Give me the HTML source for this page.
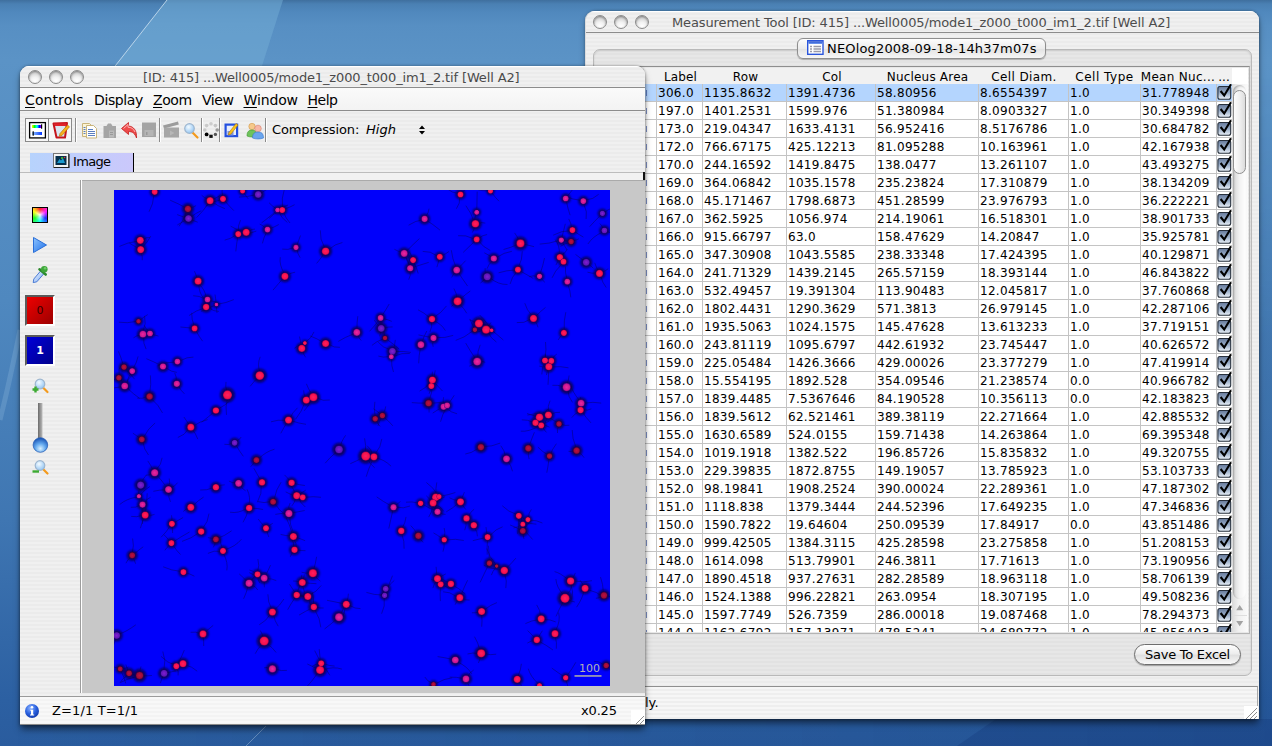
<!DOCTYPE html><html><head><meta charset="utf-8"><title>Measurement Tool</title><style>
html,body{margin:0;padding:0}
body{width:1272px;height:746px;overflow:hidden;position:relative;font-family:"DejaVu Sans","Liberation Sans",sans-serif;font-size:13px;color:#000;
background:linear-gradient(180deg,#3f6f9e 0,#4a80b3 4px,#5088bd 12px,#578fc3 25px,#5b93c6 60px,#4f88bf 300px,#3f76b2 520px,#2c60a2 700px,#2a5c9e 746px)}
.abs{position:absolute}
#bgsvg{position:absolute;left:0;top:0}
.pin{background:repeating-linear-gradient(180deg,#f0f0f0 0,#f0f0f0 2px,#ebebeb 2px,#ebebeb 4px)}
.win{position:absolute;border-radius:9px 9px 0 0;border-top:0;box-shadow:0 5px 7px -1px rgba(0,0,0,.55),0 0 3px rgba(0,0,0,.4);overflow:hidden}
.tbar{position:absolute;left:0;top:0;right:0;height:21px;border-bottom:1px solid #8c8c8c;box-shadow:inset 0 1px 0 #fff;text-align:center;line-height:22px;font-size:13px;white-space:nowrap}
.tl{position:absolute;width:12px;height:12px;border-radius:50%;border:1px solid #8b8b8b;background:radial-gradient(circle at 50% 85%,#fff 0,#f2f2f2 35%,#cfcfcf 75%,#b4b4b4 100%);box-shadow:inset 0 1px 2px rgba(0,0,0,.35)}
/* right window */
#mw{box-shadow:-1px 0 0 #dcdcdc,0 5px 7px -1px rgba(0,0,0,.55),0 0 3px rgba(0,0,0,.4);left:586px;top:11px;width:673px;height:708px}
#mw .tbar{color:#4d4d4d}
.grp{position:absolute;left:7px;top:38px;width:657px;height:625px;border:1px solid #b9b9b9;border-radius:7px;background:rgba(0,0,0,.035);box-shadow:inset 0 1px 2px rgba(0,0,0,.12)}
.tabbtn{position:absolute;left:211px;top:27px;width:247px;height:19px;border:1px solid #8e8e8e;border-radius:6px;background:linear-gradient(180deg,#fdfdfd 0,#ececec 50%,#e2e2e2 51%,#f6f6f6 100%);box-shadow:0 1px 1px rgba(0,0,0,.25);font-size:13px;line-height:19px;white-space:nowrap}
.tbl{position:absolute;left:58px;top:57px;width:588px;height:564px;background:#fff;overflow:hidden;font-size:12px}
.th{position:absolute;top:0;height:16px;line-height:18px;text-align:center;white-space:nowrap;font-size:12px;background:#f1f1f1}
.tr{position:absolute;left:0;width:588px;height:18px;border-bottom:1px solid #c4c4c4;box-sizing:border-box}
.tr.sel{background:#b4d5fe}
.td{position:absolute;top:0;height:17px;line-height:18px;border-left:1px solid #c4c4c4;padding-left:1px;box-sizing:border-box;white-space:nowrap;letter-spacing:.3px}
.cb{position:absolute;top:0;width:16px;height:18px;border-left:1px solid #c4c4c4;margin-left:0}
.cb svg{display:block}
/* left window */
#iw{left:20px;top:66px;width:625px;height:659px}
#iw .tbar{color:#4a4a4a}
.mbar{position:absolute;left:0;top:22px;right:0;height:22px;border-bottom:1px solid #8c8c8c;background:linear-gradient(180deg,#fafafa,#f3f3f3);font-size:14px;line-height:25px;white-space:nowrap}
.mbar span{position:absolute;top:0}
.mbar u{text-decoration:underline;text-underline-offset:2px}
.tsep{position:absolute;top:52px;width:1px;height:24px;background:#8a8a8a;box-shadow:1px 0 0 #fff}
.tbtn{position:absolute;top:52px;height:22px;width:22px;border:1px solid #8a8a8a;background:#f6f6f6}
.ico{position:absolute}
.tabhl{position:absolute;left:10px;top:87px;width:103px;height:19px;background:linear-gradient(90deg,#b7d3fd,#cbc8fb);border-right:1.5px solid #000}
.canvas{position:absolute;left:61px;top:114px;width:563px;height:513px;background:#c8c8c8;border-left:1px solid #fff;box-shadow:-1px 0 0 #9d9d9d, inset 0 1px 0 #aaa}
.sbar{position:absolute;left:0;top:630px;width:625px;height:27px;border-top:1px solid #9a9a9a;border-bottom:1px solid #8a8a8a;background:repeating-linear-gradient(180deg,#f8f8f8 0,#f8f8f8 2px,#f3f3f3 2px,#f3f3f3 4px);font-size:13px;line-height:28px;white-space:nowrap}
.chbtn{position:absolute;left:5px;width:26px;height:27px;border-style:solid;border-width:2px 2px 2px 2px;border-color:#5a5a5a #fff #fff #5a5a5a;font-size:11px;text-align:center;line-height:27px}
.grip{position:absolute;width:14px;height:14px;background:#fff}
.savebtn{position:absolute;left:548px;top:633px;width:105px;height:19px;border:1px solid #6e6e6e;border-radius:11px;background:linear-gradient(180deg,#fefefe 0,#ededed 45%,#e0e0e0 55%,#f8f8f8 100%);box-shadow:0 1px 1px rgba(0,0,0,.3);font-size:13px;text-align:center;line-height:19px;white-space:nowrap}
.stat2{position:absolute;left:0;top:675px;width:671px;height:33px;border-top:1px solid #8f8f8f;border-right:1px solid #aaa;font-size:13px;line-height:32px;white-space:nowrap;background:repeating-linear-gradient(180deg,#f6f6f6 0,#f6f6f6 2px,#eeeeee 2px,#eeeeee 4px)}
.scr{position:absolute;left:646px;top:73px;width:16px;height:548px;background:linear-gradient(90deg,#dadada,#f0f0f0 40%,#fafafa)}
.tick{position:absolute;left:1.5px;top:6px;width:1px;height:6px;background:#2a4aa0;opacity:.6}

</style></head><body>
<svg id="bgsvg" width="1272" height="746" viewBox="0 0 1272 746">
<defs>
<linearGradient id="cbg" x1="0" y1="0" x2="0" y2="1"><stop offset="0" stop-color="#66799a"/><stop offset=".5" stop-color="#98adc8"/><stop offset="1" stop-color="#ecf2f9"/></linearGradient><linearGradient id="tbi" x1="0" y1="0" x2="0" y2="1"><stop offset="0" stop-color="#1c46c8"/><stop offset="1" stop-color="#7aa2f4"/></linearGradient>
<linearGradient id="hz" x1="0" x2="1"><stop offset="0" stop-color="#002060" stop-opacity="0"/><stop offset="1" stop-color="#002060" stop-opacity=".14"/></linearGradient><linearGradient id="vm" x1="0" y1="0" x2="0" y2="1"><stop offset="0" stop-color="#fff" stop-opacity="0"/><stop offset=".1" stop-color="#fff" stop-opacity="0"/><stop offset=".45" stop-color="#fff" stop-opacity="1"/><stop offset="1" stop-color="#fff" stop-opacity="1"/></linearGradient><mask id="vmask"><rect width="1272" height="746" fill="url(#vm)"/></mask></defs>
<rect width="1272" height="746" fill="url(#hz)" mask="url(#vmask)"/>
<polygon points="167,0 283,0 262,66 115,66" fill="#74aed6" opacity=".5"/>
<polygon points="996,719 1272,719 1272,746 957,746" fill="#001a60" opacity=".16"/>
<line x1="246" y1="746" x2="266" y2="726" stroke="#cfe3f2" stroke-width="1" opacity=".35"/>
<path d="M0 420 Q10 380 20 330" stroke="#9cc4e4" stroke-width="5" opacity=".25" fill="none"/>
<line x1="167" y1="0" x2="112" y2="70" stroke="#cfe3f2" stroke-width="1" opacity=".8"/>
</svg>
<div class="win pin" id="mw">
<div class="tbar pin"><span style="position:absolute;left:86px;top:1px;letter-spacing:-.12px">Measurement Tool [ID: 415] ...Well0005/mode1_z000_t000_im1_2.tif [Well A2]</span>
<i class="tl" style="left:7px;top:4px"></i><i class="tl" style="left:28px;top:4px"></i><i class="tl" style="left:49px;top:4px"></i></div>
<div class="grp"></div>
<div class="tabbtn"><svg class="abs" style="left:9px;top:1px" width="17" height="15" viewBox="0 0 17 15"><rect x=".7" y=".7" width="15.300" height="13.600" fill="#fff" stroke="#2a55dc" stroke-width="1.400"/><rect x="1.400" y="1.400" width="14" height="2.600" fill="url(#tbi)"/><path d="M3 6.500h2 M3 9h2 M3 11.500h2 M6.500 6.500h7.500 M6.500 9h7.500 M6.500 11.500h7.500" stroke="#9a9aa8" stroke-width="1.300"/></svg><span style="position:absolute;left:29px;letter-spacing:.16px">NEOlog2008-09-18-14h37m07s</span></div>

<div class="tbl"><div class="abs" style="left:0;top:0;width:588px;height:16px;background:#f1f1f1"></div>
<div class="th" style="left:12px;width:46px;letter-spacing:0.1px;text-indent:3.0px">Label</div>
<div class="th" style="left:58px;width:84px;letter-spacing:0.2px;text-indent:3.0px">Row</div>
<div class="th" style="left:142px;width:89px;letter-spacing:0.2px;text-indent:3.0px">Col</div>
<div class="th" style="left:231px;width:103px;letter-spacing:0.2px;text-indent:2px">Nucleus Area</div>
<div class="th" style="left:334px;width:90px;letter-spacing:0.38px;text-indent:2px">Cell Diam.</div>
<div class="th" style="left:424px;width:72px;letter-spacing:0.5px;text-indent:1.0px">Cell Type</div>
<div class="th" style="left:496px;width:76px;letter-spacing:0.3px;text-indent:0px">Mean Nuc...</div>
<div class="th" style="left:572px;width:16px">...</div>
<div class="tr sel" style="top:16px"><i class="tick"></i>
<span class="td" style="left:12px;width:45px">306.0</span>
<span class="td" style="left:58px;width:83px">1135.8632</span>
<span class="td" style="left:142px;width:88px">1391.4736</span>
<span class="td" style="left:231px;width:102px">58.80956</span>
<span class="td" style="left:334px;width:89px">8.6554397</span>
<span class="td" style="left:424px;width:71px">1.0</span>
<span class="td" style="left:496px;width:75px">31.778948</span>
<span class="cb" style="left:572px"><svg width="16" height="18" viewBox="0 0 16 18"><rect x="0.9" y="2.5" width="12.8" height="12.8" rx="2" fill="url(#cbg)" stroke="#27303c" stroke-width="1.1"/><path d="M3.6 7 L7.2 11.5 L14 0.3" fill="none" stroke="#000" stroke-width="2.1"/></svg></span>
</div>
<div class="tr" style="top:34px"><i class="tick"></i>
<span class="td" style="left:12px;width:45px">197.0</span>
<span class="td" style="left:58px;width:83px">1401.2531</span>
<span class="td" style="left:142px;width:88px">1599.976</span>
<span class="td" style="left:231px;width:102px">51.380984</span>
<span class="td" style="left:334px;width:89px">8.0903327</span>
<span class="td" style="left:424px;width:71px">1.0</span>
<span class="td" style="left:496px;width:75px">30.349398</span>
<span class="cb" style="left:572px"><svg width="16" height="18" viewBox="0 0 16 18"><rect x="0.9" y="2.5" width="12.8" height="12.8" rx="2" fill="url(#cbg)" stroke="#27303c" stroke-width="1.1"/><path d="M3.6 7 L7.2 11.5 L14 0.3" fill="none" stroke="#000" stroke-width="2.1"/></svg></span>
</div>
<div class="tr" style="top:52px"><i class="tick"></i>
<span class="td" style="left:12px;width:45px">173.0</span>
<span class="td" style="left:58px;width:83px">219.04347</span>
<span class="td" style="left:142px;width:88px">1633.4131</span>
<span class="td" style="left:231px;width:102px">56.952416</span>
<span class="td" style="left:334px;width:89px">8.5176786</span>
<span class="td" style="left:424px;width:71px">1.0</span>
<span class="td" style="left:496px;width:75px">30.684782</span>
<span class="cb" style="left:572px"><svg width="16" height="18" viewBox="0 0 16 18"><rect x="0.9" y="2.5" width="12.8" height="12.8" rx="2" fill="url(#cbg)" stroke="#27303c" stroke-width="1.1"/><path d="M3.6 7 L7.2 11.5 L14 0.3" fill="none" stroke="#000" stroke-width="2.1"/></svg></span>
</div>
<div class="tr" style="top:70px"><i class="tick"></i>
<span class="td" style="left:12px;width:45px">172.0</span>
<span class="td" style="left:58px;width:83px">766.67175</span>
<span class="td" style="left:142px;width:88px">425.12213</span>
<span class="td" style="left:231px;width:102px">81.095288</span>
<span class="td" style="left:334px;width:89px">10.163961</span>
<span class="td" style="left:424px;width:71px">1.0</span>
<span class="td" style="left:496px;width:75px">42.167938</span>
<span class="cb" style="left:572px"><svg width="16" height="18" viewBox="0 0 16 18"><rect x="0.9" y="2.5" width="12.8" height="12.8" rx="2" fill="url(#cbg)" stroke="#27303c" stroke-width="1.1"/><path d="M3.6 7 L7.2 11.5 L14 0.3" fill="none" stroke="#000" stroke-width="2.1"/></svg></span>
</div>
<div class="tr" style="top:88px"><i class="tick"></i>
<span class="td" style="left:12px;width:45px">170.0</span>
<span class="td" style="left:58px;width:83px">244.16592</span>
<span class="td" style="left:142px;width:88px">1419.8475</span>
<span class="td" style="left:231px;width:102px">138.0477</span>
<span class="td" style="left:334px;width:89px">13.261107</span>
<span class="td" style="left:424px;width:71px">1.0</span>
<span class="td" style="left:496px;width:75px">43.493275</span>
<span class="cb" style="left:572px"><svg width="16" height="18" viewBox="0 0 16 18"><rect x="0.9" y="2.5" width="12.8" height="12.8" rx="2" fill="url(#cbg)" stroke="#27303c" stroke-width="1.1"/><path d="M3.6 7 L7.2 11.5 L14 0.3" fill="none" stroke="#000" stroke-width="2.1"/></svg></span>
</div>
<div class="tr" style="top:106px"><i class="tick"></i>
<span class="td" style="left:12px;width:45px">169.0</span>
<span class="td" style="left:58px;width:83px">364.06842</span>
<span class="td" style="left:142px;width:88px">1035.1578</span>
<span class="td" style="left:231px;width:102px">235.23824</span>
<span class="td" style="left:334px;width:89px">17.310879</span>
<span class="td" style="left:424px;width:71px">1.0</span>
<span class="td" style="left:496px;width:75px">38.134209</span>
<span class="cb" style="left:572px"><svg width="16" height="18" viewBox="0 0 16 18"><rect x="0.9" y="2.5" width="12.8" height="12.8" rx="2" fill="url(#cbg)" stroke="#27303c" stroke-width="1.1"/><path d="M3.6 7 L7.2 11.5 L14 0.3" fill="none" stroke="#000" stroke-width="2.1"/></svg></span>
</div>
<div class="tr" style="top:124px"><i class="tick"></i>
<span class="td" style="left:12px;width:45px">168.0</span>
<span class="td" style="left:58px;width:83px">45.171467</span>
<span class="td" style="left:142px;width:88px">1798.6873</span>
<span class="td" style="left:231px;width:102px">451.28599</span>
<span class="td" style="left:334px;width:89px">23.976793</span>
<span class="td" style="left:424px;width:71px">1.0</span>
<span class="td" style="left:496px;width:75px">36.222221</span>
<span class="cb" style="left:572px"><svg width="16" height="18" viewBox="0 0 16 18"><rect x="0.9" y="2.5" width="12.8" height="12.8" rx="2" fill="url(#cbg)" stroke="#27303c" stroke-width="1.1"/><path d="M3.6 7 L7.2 11.5 L14 0.3" fill="none" stroke="#000" stroke-width="2.1"/></svg></span>
</div>
<div class="tr" style="top:142px"><i class="tick"></i>
<span class="td" style="left:12px;width:45px">167.0</span>
<span class="td" style="left:58px;width:83px">362.5925</span>
<span class="td" style="left:142px;width:88px">1056.974</span>
<span class="td" style="left:231px;width:102px">214.19061</span>
<span class="td" style="left:334px;width:89px">16.518301</span>
<span class="td" style="left:424px;width:71px">1.0</span>
<span class="td" style="left:496px;width:75px">38.901733</span>
<span class="cb" style="left:572px"><svg width="16" height="18" viewBox="0 0 16 18"><rect x="0.9" y="2.5" width="12.8" height="12.8" rx="2" fill="url(#cbg)" stroke="#27303c" stroke-width="1.1"/><path d="M3.6 7 L7.2 11.5 L14 0.3" fill="none" stroke="#000" stroke-width="2.1"/></svg></span>
</div>
<div class="tr" style="top:160px"><i class="tick"></i>
<span class="td" style="left:12px;width:45px">166.0</span>
<span class="td" style="left:58px;width:83px">915.66797</span>
<span class="td" style="left:142px;width:88px">63.0</span>
<span class="td" style="left:231px;width:102px">158.47629</span>
<span class="td" style="left:334px;width:89px">14.20847</span>
<span class="td" style="left:424px;width:71px">1.0</span>
<span class="td" style="left:496px;width:75px">35.925781</span>
<span class="cb" style="left:572px"><svg width="16" height="18" viewBox="0 0 16 18"><rect x="0.9" y="2.5" width="12.8" height="12.8" rx="2" fill="url(#cbg)" stroke="#27303c" stroke-width="1.1"/><path d="M3.6 7 L7.2 11.5 L14 0.3" fill="none" stroke="#000" stroke-width="2.1"/></svg></span>
</div>
<div class="tr" style="top:178px"><i class="tick"></i>
<span class="td" style="left:12px;width:45px">165.0</span>
<span class="td" style="left:58px;width:83px">347.30908</span>
<span class="td" style="left:142px;width:88px">1043.5585</span>
<span class="td" style="left:231px;width:102px">238.33348</span>
<span class="td" style="left:334px;width:89px">17.424395</span>
<span class="td" style="left:424px;width:71px">1.0</span>
<span class="td" style="left:496px;width:75px">40.129871</span>
<span class="cb" style="left:572px"><svg width="16" height="18" viewBox="0 0 16 18"><rect x="0.9" y="2.5" width="12.8" height="12.8" rx="2" fill="url(#cbg)" stroke="#27303c" stroke-width="1.1"/><path d="M3.6 7 L7.2 11.5 L14 0.3" fill="none" stroke="#000" stroke-width="2.1"/></svg></span>
</div>
<div class="tr" style="top:196px"><i class="tick"></i>
<span class="td" style="left:12px;width:45px">164.0</span>
<span class="td" style="left:58px;width:83px">241.71329</span>
<span class="td" style="left:142px;width:88px">1439.2145</span>
<span class="td" style="left:231px;width:102px">265.57159</span>
<span class="td" style="left:334px;width:89px">18.393144</span>
<span class="td" style="left:424px;width:71px">1.0</span>
<span class="td" style="left:496px;width:75px">46.843822</span>
<span class="cb" style="left:572px"><svg width="16" height="18" viewBox="0 0 16 18"><rect x="0.9" y="2.5" width="12.8" height="12.8" rx="2" fill="url(#cbg)" stroke="#27303c" stroke-width="1.1"/><path d="M3.6 7 L7.2 11.5 L14 0.3" fill="none" stroke="#000" stroke-width="2.1"/></svg></span>
</div>
<div class="tr" style="top:214px"><i class="tick"></i>
<span class="td" style="left:12px;width:45px">163.0</span>
<span class="td" style="left:58px;width:83px">532.49457</span>
<span class="td" style="left:142px;width:88px">19.391304</span>
<span class="td" style="left:231px;width:102px">113.90483</span>
<span class="td" style="left:334px;width:89px">12.045817</span>
<span class="td" style="left:424px;width:71px">1.0</span>
<span class="td" style="left:496px;width:75px">37.760868</span>
<span class="cb" style="left:572px"><svg width="16" height="18" viewBox="0 0 16 18"><rect x="0.9" y="2.5" width="12.8" height="12.8" rx="2" fill="url(#cbg)" stroke="#27303c" stroke-width="1.1"/><path d="M3.6 7 L7.2 11.5 L14 0.3" fill="none" stroke="#000" stroke-width="2.1"/></svg></span>
</div>
<div class="tr" style="top:232px"><i class="tick"></i>
<span class="td" style="left:12px;width:45px">162.0</span>
<span class="td" style="left:58px;width:83px">1802.4431</span>
<span class="td" style="left:142px;width:88px">1290.3629</span>
<span class="td" style="left:231px;width:102px">571.3813</span>
<span class="td" style="left:334px;width:89px">26.979145</span>
<span class="td" style="left:424px;width:71px">1.0</span>
<span class="td" style="left:496px;width:75px">42.287106</span>
<span class="cb" style="left:572px"><svg width="16" height="18" viewBox="0 0 16 18"><rect x="0.9" y="2.5" width="12.8" height="12.8" rx="2" fill="url(#cbg)" stroke="#27303c" stroke-width="1.1"/><path d="M3.6 7 L7.2 11.5 L14 0.3" fill="none" stroke="#000" stroke-width="2.1"/></svg></span>
</div>
<div class="tr" style="top:250px"><i class="tick"></i>
<span class="td" style="left:12px;width:45px">161.0</span>
<span class="td" style="left:58px;width:83px">1935.5063</span>
<span class="td" style="left:142px;width:88px">1024.1575</span>
<span class="td" style="left:231px;width:102px">145.47628</span>
<span class="td" style="left:334px;width:89px">13.613233</span>
<span class="td" style="left:424px;width:71px">1.0</span>
<span class="td" style="left:496px;width:75px">37.719151</span>
<span class="cb" style="left:572px"><svg width="16" height="18" viewBox="0 0 16 18"><rect x="0.9" y="2.5" width="12.8" height="12.8" rx="2" fill="url(#cbg)" stroke="#27303c" stroke-width="1.1"/><path d="M3.6 7 L7.2 11.5 L14 0.3" fill="none" stroke="#000" stroke-width="2.1"/></svg></span>
</div>
<div class="tr" style="top:268px"><i class="tick"></i>
<span class="td" style="left:12px;width:45px">160.0</span>
<span class="td" style="left:58px;width:83px">243.81119</span>
<span class="td" style="left:142px;width:88px">1095.6797</span>
<span class="td" style="left:231px;width:102px">442.61932</span>
<span class="td" style="left:334px;width:89px">23.745447</span>
<span class="td" style="left:424px;width:71px">1.0</span>
<span class="td" style="left:496px;width:75px">40.626572</span>
<span class="cb" style="left:572px"><svg width="16" height="18" viewBox="0 0 16 18"><rect x="0.9" y="2.5" width="12.8" height="12.8" rx="2" fill="url(#cbg)" stroke="#27303c" stroke-width="1.1"/><path d="M3.6 7 L7.2 11.5 L14 0.3" fill="none" stroke="#000" stroke-width="2.1"/></svg></span>
</div>
<div class="tr" style="top:286px"><i class="tick"></i>
<span class="td" style="left:12px;width:45px">159.0</span>
<span class="td" style="left:58px;width:83px">225.05484</span>
<span class="td" style="left:142px;width:88px">1426.3666</span>
<span class="td" style="left:231px;width:102px">429.00026</span>
<span class="td" style="left:334px;width:89px">23.377279</span>
<span class="td" style="left:424px;width:71px">1.0</span>
<span class="td" style="left:496px;width:75px">47.419914</span>
<span class="cb" style="left:572px"><svg width="16" height="18" viewBox="0 0 16 18"><rect x="0.9" y="2.5" width="12.8" height="12.8" rx="2" fill="url(#cbg)" stroke="#27303c" stroke-width="1.1"/><path d="M3.6 7 L7.2 11.5 L14 0.3" fill="none" stroke="#000" stroke-width="2.1"/></svg></span>
</div>
<div class="tr" style="top:304px"><i class="tick"></i>
<span class="td" style="left:12px;width:45px">158.0</span>
<span class="td" style="left:58px;width:83px">15.554195</span>
<span class="td" style="left:142px;width:88px">1892.528</span>
<span class="td" style="left:231px;width:102px">354.09546</span>
<span class="td" style="left:334px;width:89px">21.238574</span>
<span class="td" style="left:424px;width:71px">0.0</span>
<span class="td" style="left:496px;width:75px">40.966782</span>
<span class="cb" style="left:572px"><svg width="16" height="18" viewBox="0 0 16 18"><rect x="0.9" y="2.5" width="12.8" height="12.8" rx="2" fill="url(#cbg)" stroke="#27303c" stroke-width="1.1"/><path d="M3.6 7 L7.2 11.5 L14 0.3" fill="none" stroke="#000" stroke-width="2.1"/></svg></span>
</div>
<div class="tr" style="top:322px"><i class="tick"></i>
<span class="td" style="left:12px;width:45px">157.0</span>
<span class="td" style="left:58px;width:83px">1839.4485</span>
<span class="td" style="left:142px;width:88px">7.5367646</span>
<span class="td" style="left:231px;width:102px">84.190528</span>
<span class="td" style="left:334px;width:89px">10.356113</span>
<span class="td" style="left:424px;width:71px">0.0</span>
<span class="td" style="left:496px;width:75px">42.183823</span>
<span class="cb" style="left:572px"><svg width="16" height="18" viewBox="0 0 16 18"><rect x="0.9" y="2.5" width="12.8" height="12.8" rx="2" fill="url(#cbg)" stroke="#27303c" stroke-width="1.1"/><path d="M3.6 7 L7.2 11.5 L14 0.3" fill="none" stroke="#000" stroke-width="2.1"/></svg></span>
</div>
<div class="tr" style="top:340px"><i class="tick"></i>
<span class="td" style="left:12px;width:45px">156.0</span>
<span class="td" style="left:58px;width:83px">1839.5612</span>
<span class="td" style="left:142px;width:88px">62.521461</span>
<span class="td" style="left:231px;width:102px">389.38119</span>
<span class="td" style="left:334px;width:89px">22.271664</span>
<span class="td" style="left:424px;width:71px">1.0</span>
<span class="td" style="left:496px;width:75px">42.885532</span>
<span class="cb" style="left:572px"><svg width="16" height="18" viewBox="0 0 16 18"><rect x="0.9" y="2.5" width="12.8" height="12.8" rx="2" fill="url(#cbg)" stroke="#27303c" stroke-width="1.1"/><path d="M3.6 7 L7.2 11.5 L14 0.3" fill="none" stroke="#000" stroke-width="2.1"/></svg></span>
</div>
<div class="tr" style="top:358px"><i class="tick"></i>
<span class="td" style="left:12px;width:45px">155.0</span>
<span class="td" style="left:58px;width:83px">1630.6589</span>
<span class="td" style="left:142px;width:88px">524.0155</span>
<span class="td" style="left:231px;width:102px">159.71438</span>
<span class="td" style="left:334px;width:89px">14.263864</span>
<span class="td" style="left:424px;width:71px">1.0</span>
<span class="td" style="left:496px;width:75px">69.395348</span>
<span class="cb" style="left:572px"><svg width="16" height="18" viewBox="0 0 16 18"><rect x="0.9" y="2.5" width="12.8" height="12.8" rx="2" fill="url(#cbg)" stroke="#27303c" stroke-width="1.1"/><path d="M3.6 7 L7.2 11.5 L14 0.3" fill="none" stroke="#000" stroke-width="2.1"/></svg></span>
</div>
<div class="tr" style="top:376px"><i class="tick"></i>
<span class="td" style="left:12px;width:45px">154.0</span>
<span class="td" style="left:58px;width:83px">1019.1918</span>
<span class="td" style="left:142px;width:88px">1382.522</span>
<span class="td" style="left:231px;width:102px">196.85726</span>
<span class="td" style="left:334px;width:89px">15.835832</span>
<span class="td" style="left:424px;width:71px">1.0</span>
<span class="td" style="left:496px;width:75px">49.320755</span>
<span class="cb" style="left:572px"><svg width="16" height="18" viewBox="0 0 16 18"><rect x="0.9" y="2.5" width="12.8" height="12.8" rx="2" fill="url(#cbg)" stroke="#27303c" stroke-width="1.1"/><path d="M3.6 7 L7.2 11.5 L14 0.3" fill="none" stroke="#000" stroke-width="2.1"/></svg></span>
</div>
<div class="tr" style="top:394px"><i class="tick"></i>
<span class="td" style="left:12px;width:45px">153.0</span>
<span class="td" style="left:58px;width:83px">229.39835</span>
<span class="td" style="left:142px;width:88px">1872.8755</span>
<span class="td" style="left:231px;width:102px">149.19057</span>
<span class="td" style="left:334px;width:89px">13.785923</span>
<span class="td" style="left:424px;width:71px">1.0</span>
<span class="td" style="left:496px;width:75px">53.103733</span>
<span class="cb" style="left:572px"><svg width="16" height="18" viewBox="0 0 16 18"><rect x="0.9" y="2.5" width="12.8" height="12.8" rx="2" fill="url(#cbg)" stroke="#27303c" stroke-width="1.1"/><path d="M3.6 7 L7.2 11.5 L14 0.3" fill="none" stroke="#000" stroke-width="2.1"/></svg></span>
</div>
<div class="tr" style="top:412px"><i class="tick"></i>
<span class="td" style="left:12px;width:45px">152.0</span>
<span class="td" style="left:58px;width:83px">98.19841</span>
<span class="td" style="left:142px;width:88px">1908.2524</span>
<span class="td" style="left:231px;width:102px">390.00024</span>
<span class="td" style="left:334px;width:89px">22.289361</span>
<span class="td" style="left:424px;width:71px">1.0</span>
<span class="td" style="left:496px;width:75px">47.187302</span>
<span class="cb" style="left:572px"><svg width="16" height="18" viewBox="0 0 16 18"><rect x="0.9" y="2.5" width="12.8" height="12.8" rx="2" fill="url(#cbg)" stroke="#27303c" stroke-width="1.1"/><path d="M3.6 7 L7.2 11.5 L14 0.3" fill="none" stroke="#000" stroke-width="2.1"/></svg></span>
</div>
<div class="tr" style="top:430px"><i class="tick"></i>
<span class="td" style="left:12px;width:45px">151.0</span>
<span class="td" style="left:58px;width:83px">1118.838</span>
<span class="td" style="left:142px;width:88px">1379.3444</span>
<span class="td" style="left:231px;width:102px">244.52396</span>
<span class="td" style="left:334px;width:89px">17.649235</span>
<span class="td" style="left:424px;width:71px">1.0</span>
<span class="td" style="left:496px;width:75px">47.346836</span>
<span class="cb" style="left:572px"><svg width="16" height="18" viewBox="0 0 16 18"><rect x="0.9" y="2.5" width="12.8" height="12.8" rx="2" fill="url(#cbg)" stroke="#27303c" stroke-width="1.1"/><path d="M3.6 7 L7.2 11.5 L14 0.3" fill="none" stroke="#000" stroke-width="2.1"/></svg></span>
</div>
<div class="tr" style="top:448px"><i class="tick"></i>
<span class="td" style="left:12px;width:45px">150.0</span>
<span class="td" style="left:58px;width:83px">1590.7822</span>
<span class="td" style="left:142px;width:88px">19.64604</span>
<span class="td" style="left:231px;width:102px">250.09539</span>
<span class="td" style="left:334px;width:89px">17.84917</span>
<span class="td" style="left:424px;width:71px">0.0</span>
<span class="td" style="left:496px;width:75px">43.851486</span>
<span class="cb" style="left:572px"><svg width="16" height="18" viewBox="0 0 16 18"><rect x="0.9" y="2.5" width="12.8" height="12.8" rx="2" fill="url(#cbg)" stroke="#27303c" stroke-width="1.1"/><path d="M3.6 7 L7.2 11.5 L14 0.3" fill="none" stroke="#000" stroke-width="2.1"/></svg></span>
</div>
<div class="tr" style="top:466px"><i class="tick"></i>
<span class="td" style="left:12px;width:45px">149.0</span>
<span class="td" style="left:58px;width:83px">999.42505</span>
<span class="td" style="left:142px;width:88px">1384.3115</span>
<span class="td" style="left:231px;width:102px">425.28598</span>
<span class="td" style="left:334px;width:89px">23.275858</span>
<span class="td" style="left:424px;width:71px">1.0</span>
<span class="td" style="left:496px;width:75px">51.208153</span>
<span class="cb" style="left:572px"><svg width="16" height="18" viewBox="0 0 16 18"><rect x="0.9" y="2.5" width="12.8" height="12.8" rx="2" fill="url(#cbg)" stroke="#27303c" stroke-width="1.1"/><path d="M3.6 7 L7.2 11.5 L14 0.3" fill="none" stroke="#000" stroke-width="2.1"/></svg></span>
</div>
<div class="tr" style="top:484px"><i class="tick"></i>
<span class="td" style="left:12px;width:45px">148.0</span>
<span class="td" style="left:58px;width:83px">1614.098</span>
<span class="td" style="left:142px;width:88px">513.79901</span>
<span class="td" style="left:231px;width:102px">246.3811</span>
<span class="td" style="left:334px;width:89px">17.71613</span>
<span class="td" style="left:424px;width:71px">1.0</span>
<span class="td" style="left:496px;width:75px">73.190956</span>
<span class="cb" style="left:572px"><svg width="16" height="18" viewBox="0 0 16 18"><rect x="0.9" y="2.5" width="12.8" height="12.8" rx="2" fill="url(#cbg)" stroke="#27303c" stroke-width="1.1"/><path d="M3.6 7 L7.2 11.5 L14 0.3" fill="none" stroke="#000" stroke-width="2.1"/></svg></span>
</div>
<div class="tr" style="top:502px"><i class="tick"></i>
<span class="td" style="left:12px;width:45px">147.0</span>
<span class="td" style="left:58px;width:83px">1890.4518</span>
<span class="td" style="left:142px;width:88px">937.27631</span>
<span class="td" style="left:231px;width:102px">282.28589</span>
<span class="td" style="left:334px;width:89px">18.963118</span>
<span class="td" style="left:424px;width:71px">1.0</span>
<span class="td" style="left:496px;width:75px">58.706139</span>
<span class="cb" style="left:572px"><svg width="16" height="18" viewBox="0 0 16 18"><rect x="0.9" y="2.5" width="12.8" height="12.8" rx="2" fill="url(#cbg)" stroke="#27303c" stroke-width="1.1"/><path d="M3.6 7 L7.2 11.5 L14 0.3" fill="none" stroke="#000" stroke-width="2.1"/></svg></span>
</div>
<div class="tr" style="top:520px"><i class="tick"></i>
<span class="td" style="left:12px;width:45px">146.0</span>
<span class="td" style="left:58px;width:83px">1524.1388</span>
<span class="td" style="left:142px;width:88px">996.22821</span>
<span class="td" style="left:231px;width:102px">263.0954</span>
<span class="td" style="left:334px;width:89px">18.307195</span>
<span class="td" style="left:424px;width:71px">1.0</span>
<span class="td" style="left:496px;width:75px">49.508236</span>
<span class="cb" style="left:572px"><svg width="16" height="18" viewBox="0 0 16 18"><rect x="0.9" y="2.5" width="12.8" height="12.8" rx="2" fill="url(#cbg)" stroke="#27303c" stroke-width="1.1"/><path d="M3.6 7 L7.2 11.5 L14 0.3" fill="none" stroke="#000" stroke-width="2.1"/></svg></span>
</div>
<div class="tr" style="top:538px"><i class="tick"></i>
<span class="td" style="left:12px;width:45px">145.0</span>
<span class="td" style="left:58px;width:83px">1597.7749</span>
<span class="td" style="left:142px;width:88px">526.7359</span>
<span class="td" style="left:231px;width:102px">286.00018</span>
<span class="td" style="left:334px;width:89px">19.087468</span>
<span class="td" style="left:424px;width:71px">1.0</span>
<span class="td" style="left:496px;width:75px">78.294373</span>
<span class="cb" style="left:572px"><svg width="16" height="18" viewBox="0 0 16 18"><rect x="0.9" y="2.5" width="12.8" height="12.8" rx="2" fill="url(#cbg)" stroke="#27303c" stroke-width="1.1"/><path d="M3.6 7 L7.2 11.5 L14 0.3" fill="none" stroke="#000" stroke-width="2.1"/></svg></span>
</div>
<div class="tr" style="top:556px"><i class="tick"></i>
<span class="td" style="left:12px;width:45px">144.0</span>
<span class="td" style="left:58px;width:83px">1162.6792</span>
<span class="td" style="left:142px;width:88px">157.13971</span>
<span class="td" style="left:231px;width:102px">478.5241</span>
<span class="td" style="left:334px;width:89px">24.689772</span>
<span class="td" style="left:424px;width:71px">1.0</span>
<span class="td" style="left:496px;width:75px">45.856403</span>
<span class="cb" style="left:572px"><svg width="16" height="18" viewBox="0 0 16 18"><rect x="0.9" y="2.5" width="12.8" height="12.8" rx="2" fill="url(#cbg)" stroke="#27303c" stroke-width="1.1"/><path d="M3.6 7 L7.2 11.5 L14 0.3" fill="none" stroke="#000" stroke-width="2.1"/></svg></span>
</div>
</div>
<div class="abs" style="left:646px;top:57px;width:16px;height:16px;background:#fff"></div><div class="abs" style="left:50px;top:55px;width:612px;height:566px;border:1px solid #b4b4b4;border-top-color:#8e8e8e;box-sizing:content-box;pointer-events:none"></div>
<div class="scr">
<div class="abs" style="left:1px;top:1px;width:13px;height:514px;border-radius:7px;background:linear-gradient(90deg,#d6d6d6,#f2f2f2 50%,#fff);box-shadow:inset 1px 1px 2px rgba(0,0,0,.25)"></div>
<div class="abs" style="left:1px;top:6px;width:13px;height:84px;border-radius:7px;border:1px solid #8f8f8f;box-sizing:border-box;background:linear-gradient(90deg,#fdfdfd,#f0f0f0 50%,#dcdcdc)"></div>
<svg class="abs" style="left:0;top:516px" width="16" height="32" viewBox="0 0 16 32"><path d="M4.2 10.2 L7.700 5 L11.200 10.200Z M4.200 21 L7.700 26.200 L11.200 21Z" fill="#a2a2a2"/><path d="M0 15.500H15" stroke="#dedede" stroke-width="1"/></svg>
</div>
<div class="savebtn"><span style="letter-spacing:-.27px">Save To Excel</span></div>
<div class="stat2"><span style="position:absolute;left:59px;top:0">ly.</span></div>
<div class="grip" style="left:658px;top:695px"><svg width="14" height="14" viewBox="0 0 14 14"><path d="M2 13 L13 2 M6 13 L13 6 M10 13 L13 10" stroke="#8d8d8d" stroke-width="1" fill="none"/></svg></div>
</div>

<div class="win pin" id="iw">
<div class="tbar pin"><span style="position:absolute;left:123px;top:1px;letter-spacing:-.14px">[ID: 415] ...Well0005/mode1_z000_t000_im1_2.tif [Well A2]</span>
<i class="tl" style="left:8px;top:4px"></i><i class="tl" style="left:29px;top:4px"></i><i class="tl" style="left:50px;top:4px"></i></div>
<div class="mbar"><span style="left:5px;letter-spacing:.1px"><u>C</u>ontrols</span><span style="left:74px;letter-spacing:-.38px">Display</span><span style="left:133px;letter-spacing:-.45px"><u>Z</u>oom</span><span style="left:182px;letter-spacing:-.44px">View</span><span style="left:223.500px;letter-spacing:-.14px"><u>W</u>indow</span><span style="left:287.500px;letter-spacing:-.5px"><u>H</u>elp</span></div>

<!-- toolbar -->
<div class="tbtn" style="left:5px"></div><div class="tbtn" style="left:28px"></div>
<i class="tsep" style="left:55px"></i><i class="tsep" style="left:139px"></i><i class="tsep" style="left:181px"></i><i class="tsep" style="left:199px"></i><i class="tsep" style="left:245px"></i>
<svg class="ico" style="left:0;top:44px" width="300" height="40" viewBox="0 0 300 40">
<defs>
<linearGradient id="rb" x1="0" x2="1"><stop offset="0" stop-color="#ff0"/><stop offset=".25" stop-color="#0f0"/><stop offset=".5" stop-color="#0ff"/><stop offset=".75" stop-color="#00f"/><stop offset="1" stop-color="#f0f"/></linearGradient>
<linearGradient id="bl" x1="0" x2="1"><stop offset="0" stop-color="#9cf"/><stop offset="1" stop-color="#03f"/></linearGradient>
<radialGradient id="lens" cx=".4" cy=".35" r=".7"><stop offset="0" stop-color="#f4fbff"/><stop offset="1" stop-color="#8ec3f3"/></radialGradient>
</defs>
<!-- icon1 -->
<rect x="9.6" y="12.6" width="15.8" height="15.3" fill="#fff" stroke="#000" stroke-width="1.3"/>
<rect x="12" y="15" width="10" height="3" fill="url(#rb)"/><rect x="12" y="22" width="10" height="3" fill="url(#bl)"/>
<rect x="21" y="14.3" width="1.2" height="4.4" fill="#000"/><rect x="12.6" y="21.3" width="1.2" height="4.4" fill="#000"/>
<!-- icon2 notepad -->
<path d="M33.5 13.5 L47 13 L45 27.5 L36.5 27.5 Z" fill="#d9e6f2" stroke="#c4141c" stroke-width="2" stroke-linejoin="round"/>
<path d="M34 13.5 L46.5 13.2 L46 16 L35 16Z" fill="#e0222a"/>
<path d="M40 23.5 L47.5 15 L49.5 16.8 L42 25.5 L39.3 26.3Z" fill="#f6b21b" stroke="#b26b00" stroke-width=".6"/>
<!-- copy -->
<path d="M62.5 13.5 h7 l2.5 2.5 v10.5 h-9.5z" fill="#fbf3d5" stroke="#c9b47a" stroke-width="1"/>
<path d="M66.5 15.5 h7 l3 3 v9.5 h-10z" fill="#fff" stroke="#c9b47a" stroke-width="1"/>
<path d="M68 19.5h5 M68 21.5h7 M68 23.5h7 M68 25.5h7 M63.5 17.5h2 M63.5 19.5h2 M63.5 21.5h2 M63.5 23.5h2" stroke="#5b7fc0" stroke-width="1"/>
<!-- paste gray -->
<path d="M83.5 16 h3 l1.5-2.5 h3 l1.5 2.5 h3.5 v12 h-12.5z" fill="#a5a5a5"/>
<path d="M89 20.5h5v7h-5z" fill="#b9b9b9"/><path d="M90 22.5h3M90 24.5h3" stroke="#999" stroke-width="1"/>
<!-- undo -->
<path d="M101.5 18.5 L108.5 12.5 L108.5 16 C114 16.5 117 21 116.5 28 C115 23.5 112.5 21.5 108.5 21.5 L108.5 24.5 Z" fill="#ee4a4a" stroke="#c32020" stroke-width=".8" stroke-linejoin="round"/>
<path d="M103.5 18.5 L108 14.5 L108 17.2 C111 17.3 113.5 18.5 115 22" fill="none" stroke="#ffb0b0" stroke-width="1"/>
<!-- save gray -->
<rect x="122" y="12.5" width="14" height="14.5" fill="#a3a3a3"/><rect x="124.5" y="20" width="9" height="6" fill="#b5b5b5"/><rect x="126" y="22" width="1.5" height="3" fill="#999"/>
<!-- clapboard gray -->
<path d="M143 15.5 L158 11.5 L158.8 14.5 L144 18.5z" fill="#9b9b9b"/><rect x="144" y="17.5" width="15" height="10" fill="#a6a6a6"/><path d="M150 20.5 L154.5 23 L150 25.5z" fill="#b7b7b7"/>
<!-- magnifier -->
<path d="M172 22 L177.5 27.5" stroke="#f39a1d" stroke-width="2.2" stroke-linecap="round"/>
<circle cx="169.5" cy="18.5" r="4.8" fill="url(#lens)" stroke="#9eb6cf" stroke-width="1.2"/>
<!-- spinner -->
<g>
<circle cx="191.000" cy="13.800" r="1.800" fill="#cdcdcd"/>
<circle cx="195.384" cy="15.616" r="1.800" fill="#c6c6c6"/>
<circle cx="197.200" cy="20.000" r="1.800" fill="#9a9a9a"/>
<circle cx="195.384" cy="24.384" r="1.700" fill="#555"/>
<rect x="189.3" y="24.7" width="3.4" height="3.2" fill="#111"/>
<circle cx="186.616" cy="24.384" r="1.900" fill="#000"/>
<circle cx="184.800" cy="20.000" r="1.800" fill="#c8c8c8"/>
<circle cx="186.616" cy="15.616" r="1.800" fill="#cacaca"/>
</g>
<!-- blue edit -->
<rect x="205.600" y="14.600" width="11.500" height="11.500" fill="#e8eefc" stroke="#2450e0" stroke-width="2.200"/>
<rect x="207.500" y="21" width="6" height="4.500" fill="#7f93d8"/>
<path d="M209 22.500 L216 13.500 L218 15 L211 24 L208.300 25Z" fill="#f8c21d" stroke="#b57a00" stroke-width=".6"/>
<!-- people -->
<circle cx="232" cy="16.500" r="3.200" fill="#f6c98b" stroke="#d49a4c" stroke-width=".6"/>
<path d="M227 26 C227 21.500 229 20 232 20 C235 20 237 21.500 237 26 C234 27.300 230 27.300 227 26Z" fill="#6fc35c" stroke="#3f9b31" stroke-width=".6"/>
<circle cx="238" cy="18.500" r="3.300" fill="#f7b7a6" stroke="#d98572" stroke-width=".6"/>
<path d="M232.500 28 C232.500 23.500 234.500 22 238 22 C241.500 22 243.500 23.500 243.500 28 C240.500 29.300 235.500 29.300 232.500 28Z" fill="#6aa5ee" stroke="#3a78cf" stroke-width=".6"/>
</svg>
<span class="abs" style="left:252px;top:55px;font-size:13px;line-height:18px;white-space:nowrap;letter-spacing:-.13px">Compression:</span>
<span class="abs" style="left:346px;top:55px;font-size:13px;line-height:18px;font-style:italic;white-space:nowrap">High</span>
<svg class="abs" style="left:398px;top:59px" width="8" height="10" viewBox="0 0 8 10"><path d="M1 4 L4 0.500 L7 4Z M1 6 L4 9.500 L7 6Z" fill="#000"/></svg>

<!-- tab -->
<div class="tabhl"></div>
<svg class="abs" style="left:33px;top:87px" width="17" height="16" viewBox="0 0 17 16"><rect x=".5" y=".5" width="15" height="14" fill="#f4f4f4" stroke="#777"/><path d="M1 14.500 H16 V1" stroke="#222" stroke-width="1.200" fill="none"/><rect x="2.500" y="3" width="11" height="9" fill="#07304c"/><path d="M4 10 L6.500 6 L8 7.500 L10 5 L12 10Z" fill="#1b9ad0"/><circle cx="9" cy="5" r="1" fill="#5c3"/><circle cx="11.500" cy="4.500" r=".8" fill="#e33"/></svg>
<span class="abs" style="left:53px;top:87px;font-size:13px;line-height:18px;letter-spacing:-.65px">Image</span>
<div class="abs" style="left:0;top:106px;width:625px;height:1px;background:#bdbdbd"></div>
<div class="abs" style="left:0;top:107px;width:625px;height:7px;background:#f2f2f2"></div>

<!-- side tools -->
<svg class="abs" style="left:0;top:130px" width="60" height="290" viewBox="0 0 60 290">
<defs>
<linearGradient id="cw1" x1="0" y1="0" x2="1" y2="1"><stop offset="0" stop-color="#ff30d0"/><stop offset=".5" stop-color="#fff"/><stop offset="1" stop-color="#2040ff"/></linearGradient>
<linearGradient id="cw2" x1="1" y1="0" x2="0" y2="1"><stop offset="0" stop-color="#ffe020"/><stop offset=".5" stop-color="#fff" stop-opacity="0"/><stop offset="1" stop-color="#20e040"/></linearGradient>
<linearGradient id="tube" x1="0" y1="0" x2="1" y2="1"><stop offset="0" stop-color="#fff"/><stop offset="1" stop-color="#6fa4f4"/></linearGradient><linearGradient id="pl" x1="0" y1="0" x2="1" y2="1"><stop offset="0" stop-color="#8ec4ff"/><stop offset="1" stop-color="#1d6fe8"/></linearGradient>
<radialGradient id="knob" cx=".5" cy=".75" r=".7"><stop offset="0" stop-color="#d8f0ff"/><stop offset=".5" stop-color="#62a8ee"/><stop offset="1" stop-color="#1d58b8"/></radialGradient>
<linearGradient id="trk" x1="0" x2="1"><stop offset="0" stop-color="#6a6a6a"/><stop offset="1" stop-color="#bdbdbd"/></linearGradient>
</defs>

<path d="M13.500 41.500 L26.500 49 L13.500 56.500Z" fill="url(#pl)" stroke="#2a6fd8" stroke-width="1"/>
<path d="M13.200 86.600 L13.800 83 L21 74.500 L24 77.500 L16.800 85.800Z" fill="url(#tube)" stroke="#3b6fd0" stroke-width=".9"/>
<path d="M19.500 73.300 L25.700 78.500" stroke="#2c8a2c" stroke-width="2.600" stroke-linecap="round"/>
<circle cx="24.300" cy="73.300" r="3.300" fill="#3ea53a"/><circle cx="25.100" cy="72.300" r="1.300" fill="#6ccc66"/>
<!-- zoom + -->
<path d="M23 191.500 L27.500 196" stroke="#f39a1d" stroke-width="2.200" stroke-linecap="round"/>
<circle cx="20" cy="188" r="4.800" fill="url(#lens)" stroke="#9eb6cf" stroke-width="1.200"/>
<path d="M12.500 193.500 h6 M15.500 190.500 v6" stroke="#3caa32" stroke-width="2.400"/>
<!-- slider -->
<rect x="18" y="207" width="4.500" height="38" fill="url(#trk)"/>
</svg>
<svg class="abs" style="left:0;top:370px" width="60" height="50" viewBox="0 0 60 50">
<circle cx="20.400" cy="9" r="7.300" fill="url(#knob)" stroke="#2a5fb5" stroke-width=".8"/>
<path d="M23 33 L27.500 37.500" stroke="#f39a1d" stroke-width="2.200" stroke-linecap="round"/>
<circle cx="20" cy="29.500" r="4.800" fill="url(#lens)" stroke="#9eb6cf" stroke-width="1.200"/>
<path d="M12.500 35.500 h6.500" stroke="#3caa32" stroke-width="2.400"/>
</svg>
<div class="abs" style="left:12px;top:141px;width:14px;height:14px;border:1.300px solid #000;background:radial-gradient(circle,#fff 0,rgba(255,255,255,.55) 22%,rgba(255,255,255,0) 60%),conic-gradient(from 0deg,#ff2020,#ff20ff,#2030ff,#20ffff,#20ff20,#ffff20,#ff2020)"></div>
<div class="chbtn" style="top:229px;background:linear-gradient(135deg,#ee0000,#9c0000);color:#300">0</div>
<div class="chbtn" style="top:269px;background:linear-gradient(135deg,#0000d8,#00008c);color:#fff;font-weight:bold">1</div>

<div class="canvas"></div><div class="abs" style="left:623px;top:106px;width:2px;height:8px;background:#111"></div>
<svg class="abs" style="left:94px;top:124px" width="496" height="496" viewBox="0 0 496 496"><rect width="496" height="496" fill="#0000fb"/><defs><radialGradient id="nb"><stop offset="0" stop-color="#ff2060"/><stop offset=".75" stop-color="#f4104c"/><stop offset="1" stop-color="#8c0050"/></radialGradient><radialGradient id="nr"><stop offset="0" stop-color="#c00a3c"/><stop offset=".7" stop-color="#98083a"/><stop offset="1" stop-color="#38003a"/></radialGradient><radialGradient id="nm"><stop offset="0" stop-color="#ec28a0"/><stop offset=".75" stop-color="#c81890"/><stop offset="1" stop-color="#580080"/></radialGradient><radialGradient id="nd"><stop offset="0" stop-color="#8020d0"/><stop offset=".75" stop-color="#6014b8"/><stop offset="1" stop-color="#2a0880"/></radialGradient><filter id="hb" x="-5%" y="-5%" width="110%" height="110%"><feGaussianBlur stdDeviation="1.3"/></filter><filter id="nbz" x="-5%" y="-5%" width="110%" height="110%"><feGaussianBlur stdDeviation="0.6"/></filter></defs>
<path d="M43.1 0.7Q45.8 -1.5 48.6 -1.9M40.0 4.4Q39.4 14.2 35.1 21.7M38.6 0.2Q35.3 -0.7 31.6 -4.9M98.9 12.2Q103.4 15.9 110.9 18.7M94.2 13.1Q91.1 18.9 82.6 27.6M93.5 9.0Q90.5 8.1 87.7 5.3M98.9 9.2Q101.9 8.2 105.5 5.8M110.8 10.9Q115.0 15.9 119.8 20.6M106.6 10.0Q98.7 10.6 91.7 16.3M108.9 6.2Q107.4 2.1 108.4 -2.6M126.7 0.1Q118.8 -3.2 110.8 -8.4M129.9 2.9Q132.2 6.3 134.3 8.9M146.9 3.0Q153.6 -1.3 163.0 -5.9M141.1 4.9Q132.8 7.1 124.9 7.1M71.1 17.5Q65.0 13.9 56.1 10.2M76.8 17.7Q79.0 17.4 82.1 15.6M72.5 21.7Q70.0 29.7 65.1 36.3M71.8 30.0Q67.6 32.4 63.3 35.0M71.6 27.5Q68.1 26.6 63.2 24.6M77.2 26.9Q81.1 23.4 87.3 20.7M77.4 29.6Q80.1 30.9 83.7 32.2M161.8 21.4Q152.3 29.5 147.6 32.8M161.9 18.6Q157.8 15.7 155.0 12.7M165.6 19.1Q168.7 16.7 174.1 15.0M164.9 21.8Q167.2 28.2 173.4 32.5M126.8 43.6Q135.0 44.7 142.3 41.1M123.8 46.7Q122.4 54.5 121.8 61.4M121.7 45.2Q116.3 49.1 110.7 50.1M124.6 41.4Q123.6 35.8 126.5 30.1M135.1 41.2Q137.3 38.9 141.0 39.1M129.3 41.1Q122.4 40.1 116.7 36.2M151.4 38.1Q148.8 35.1 145.7 34.1M156.0 38.5Q159.5 37.6 164.8 34.5M152.6 42.1Q149.5 47.8 148.4 53.4M29.2 49.4Q32.1 47.1 35.9 47.5M23.3 51.2Q13.3 52.5 5.4 56.4M24.0 58.1Q19.4 55.6 15.5 53.2M28.6 57.1Q33.3 52.7 36.8 46.1M27.2 62.7Q28.7 65.9 28.3 70.2M85.1 94.2Q84.4 102.1 89.9 108.5M83.1 88.3Q82.3 85.4 80.5 81.2M95.9 110.5Q101.2 111.1 105.6 114.3M94.5 112.0Q95.4 115.9 97.5 119.6M90.9 108.8Q85.2 105.7 79.2 105.7M92.2 107.1Q90.9 99.7 85.3 94.3M89.5 118.3Q82.4 120.2 75.1 125.5M94.9 118.0Q100.0 121.6 104.9 121.4M102.5 116.4Q102.5 119.6 103.0 123.0M100.7 115.3Q93.1 118.8 87.2 121.3M102.1 112.8Q101.7 109.0 101.0 104.5M104.1 114.1Q111.8 113.2 119.8 109.6M22.3 131.4Q13.0 133.6 4.9 132.2M26.3 130.0Q30.2 126.5 33.7 124.6M29.2 141.1Q32.5 133.4 30.5 125.9M29.6 147.2Q29.0 153.3 32.1 159.1M26.0 145.3Q23.2 145.1 19.5 147.8M34.5 141.3Q31.6 138.3 30.2 135.3M38.6 144.3Q40.9 145.2 44.5 146.1M80.1 135.8Q77.5 129.4 77.7 122.8M82.0 140.7Q85.1 146.7 88.6 151.2M77.9 138.1Q72.1 137.5 66.4 137.0M169.6 22.3Q171.4 27.8 176.0 33.0M166.0 21.5Q159.6 22.9 155.3 28.3M168.5 17.4Q167.3 7.8 170.3 -0.4M170.7 19.0Q175.3 17.6 180.6 14.7M313.0 30.6Q318.0 33.6 326.0 40.1M307.9 30.0Q302.0 30.4 294.6 35.2M311.8 26.3Q314.8 22.7 315.0 18.7M182.9 59.7Q183.7 64.1 186.2 67.7M179.6 57.7Q173.9 60.4 168.2 59.1M182.9 55.1Q184.6 50.7 186.5 45.5M209.6 63.9Q208.3 66.7 202.6 73.4M210.8 58.0Q205.6 49.2 206.3 40.3M214.6 59.7Q220.9 53.9 228.4 52.5M292.4 61.2Q298.8 54.7 305.4 48.6M291.4 66.3Q294.6 71.1 296.1 77.1M287.3 62.2Q285.1 61.8 280.4 59.3M298.0 67.7Q297.9 65.8 295.3 61.7M300.0 72.6Q302.9 78.2 304.2 83.5M323.2 66.0Q316.7 60.8 308.7 61.4M328.1 65.4Q331.9 64.0 334.9 61.5M325.1 69.3Q324.2 72.8 322.9 77.2M295.8 81.2Q297.3 85.0 294.7 89.7M295.1 75.7Q293.7 72.0 292.1 68.5M298.9 77.4Q307.1 74.7 314.7 72.4M173.8 85.2Q176.5 82.8 181.1 82.2M168.9 88.7Q165.7 92.2 159.0 100.1M170.2 83.3Q165.0 74.7 166.3 67.2M264.9 130.0Q260.6 135.9 255.6 141.3M268.0 125.7Q272.7 118.5 275.2 114.0M269.1 128.7Q273.6 129.4 277.8 131.4M270.3 138.0Q274.0 136.8 278.6 136.9M266.6 141.5Q266.6 143.1 265.6 146.3M265.2 136.0Q263.1 134.9 260.3 130.1M243.0 139.3Q242.8 132.7 243.8 126.2M244.3 145.1Q244.0 147.7 247.2 150.5M240.0 143.8Q231.0 147.1 224.3 151.4M270.6 145.8Q270.2 141.4 268.7 136.2M272.8 149.3Q279.5 154.2 285.2 159.0M269.1 149.1Q262.3 151.2 257.9 155.4M320.1 127.1Q327.1 123.4 332.5 115.9M320.2 131.0Q327.0 133.5 331.4 140.6M317.5 131.9Q318.6 136.4 315.9 141.9M315.6 127.5Q310.0 122.6 304.0 119.8M319.4 150.9Q317.9 153.2 319.2 156.9M316.7 147.4Q310.9 146.3 304.5 144.9M322.4 147.6Q330.9 148.3 339.2 145.4M308.1 151.8Q309.8 146.4 312.8 141.0M306.5 157.7Q304.8 165.7 304.7 173.3M208.8 152.2Q203.0 148.4 196.2 146.0M214.6 154.3Q220.2 158.1 225.9 157.3M187.2 155.4Q186.5 151.4 185.5 146.6M189.0 161.3Q188.8 163.3 191.6 167.3M192.0 151.7Q197.6 148.2 200.0 141.9M189.3 153.9Q185.2 154.4 180.4 158.3M281.5 161.5Q289.4 161.0 296.8 162.4M275.8 159.6Q269.2 158.0 264.2 152.2M345.7 7.0Q346.5 13.3 342.4 18.7M344.0 3.4Q338.2 2.9 333.3 -1.1M348.3 2.5Q352.6 -2.2 355.1 -4.5M376.9 -1.1Q380.3 -10.4 380.2 -19.5M377.9 2.8Q382.0 8.4 385.0 11.2M374.3 0.8Q368.7 1.2 363.5 -0.5M452.4 11.0Q453.5 17.7 456.1 25.2M453.4 6.3Q456.1 2.7 460.4 -2.7M471.7 10.0Q479.2 9.6 484.7 4.3M469.7 13.8Q473.8 22.0 472.1 29.0M466.7 10.4Q458.9 9.6 451.4 6.3M490.6 22.2Q493.7 19.7 497.5 18.3M486.7 25.1Q480.1 31.7 475.7 36.6M361.9 24.3Q361.3 30.2 357.7 34.8M362.8 20.0Q363.0 10.0 363.2 1.6M364.7 33.6Q367.1 31.9 371.3 33.1M360.3 37.0Q360.4 39.3 358.3 42.6M359.8 30.9Q357.4 23.3 351.9 15.7M457.6 37.5Q457.2 33.3 454.7 28.9M460.6 41.5Q464.5 44.4 469.4 47.1M455.8 40.8Q448.0 40.4 439.2 45.2M488.4 42.2Q479.0 46.2 473.9 54.0M489.0 38.3Q488.2 35.7 485.8 33.5M492.9 41.5Q500.1 43.6 505.5 46.6M365.1 48.3Q368.1 45.3 373.1 44.5M364.8 51.1Q368.9 57.1 376.3 60.5M360.8 51.2Q354.8 56.9 349.2 62.4M360.1 48.9Q351.3 44.5 344.1 45.7M447.8 47.7Q449.8 40.2 451.3 33.8M449.7 50.2Q452.9 51.8 456.6 50.5M448.5 52.2Q449.7 54.8 453.2 60.1M444.9 50.5Q434.8 53.9 425.7 54.1M454.6 52.7Q450.3 53.7 446.6 56.3M459.6 50.7Q461.7 50.4 464.9 48.8M410.0 54.2Q414.8 55.3 420.1 56.7M403.2 54.6Q396.7 57.7 389.5 59.5M404.8 50.3Q404.4 48.2 400.6 42.9M382.5 67.5Q389.9 62.4 397.9 61.3M378.2 70.9Q374.3 74.6 373.1 78.6M377.4 67.0Q374.0 64.6 370.3 62.8M447.9 69.3Q448.9 70.9 453.5 75.2M444.6 69.8Q443.8 71.2 441.9 75.1M445.2 64.4Q446.2 56.2 441.1 49.6M447.9 65.1Q451.3 63.2 453.1 59.4M448.0 73.8Q440.2 81.6 438.1 87.8M449.5 69.0Q448.1 66.2 449.4 62.6M469.7 70.5Q466.6 68.3 461.5 64.4M474.6 74.3Q476.0 75.0 479.3 78.2M344.8 77.8Q349.3 73.1 351.7 70.6M344.4 82.7Q347.6 87.6 353.6 96.1M340.9 82.7Q338.7 84.9 337.7 87.5M341.9 77.1Q338.3 68.7 337.3 60.2M406.2 81.0Q411.4 83.8 419.2 88.4M402.6 82.0Q397.7 86.8 396.1 94.0M401.2 80.1Q393.1 80.1 384.6 82.8M404.5 77.1Q408.4 69.6 408.3 61.3M427.1 88.1Q427.7 89.5 430.9 92.3M423.0 86.4Q419.5 85.2 415.3 86.6M426.1 84.0Q429.1 75.4 430.5 68.0M372.4 83.5Q370.5 81.6 371.1 78.1M376.3 88.0Q384.0 94.7 393.5 94.5M370.7 89.0Q370.1 90.5 366.4 93.0M488.3 81.9Q490.6 81.9 494.2 78.7M486.9 86.3Q488.1 92.4 492.2 97.5M482.4 83.1Q478.3 83.7 473.5 82.2M484.2 80.6Q482.4 77.7 480.7 72.8M453.9 94.3Q456.4 100.9 456.8 107.4M453.0 89.0Q450.8 82.6 451.5 76.7M340.8 113.5Q339.2 114.9 337.4 116.4M342.6 107.8Q343.1 104.1 339.9 98.5M346.3 109.0Q352.3 103.8 356.3 101.0M345.7 114.1Q350.4 118.8 352.8 123.3M421.8 126.3Q427.2 120.7 431.5 117.4M420.9 131.2Q423.1 133.3 424.0 137.3M416.4 129.2Q410.1 133.7 402.8 132.6M417.9 125.7Q412.6 119.9 410.8 113.2M368.4 134.2Q373.7 136.7 379.4 136.3M361.6 132.3Q359.3 130.8 355.4 129.9M360.0 137.7Q357.2 132.7 355.9 128.9M363.2 139.7Q370.4 139.2 376.9 139.6M359.0 140.8Q350.0 148.1 341.7 150.4M368.5 140.3Q364.2 142.9 358.1 141.9M369.0 137.8Q363.5 133.3 358.4 131.2M374.1 136.8Q374.0 136.0 377.0 132.5M374.4 142.5Q376.2 147.9 382.4 152.0M379.0 141.3Q382.9 144.3 389.3 150.0M376.5 138.8Q373.3 132.5 365.7 125.0M450.2 140.2Q449.7 130.5 451.8 122.2M448.3 144.9Q445.9 146.7 444.1 150.0M9.1 174.6Q7.4 168.4 4.5 161.4M11.8 179.1Q18.0 185.7 20.5 189.1M17.1 183.5Q14.4 186.4 13.1 191.4M19.2 178.6Q23.1 171.7 24.1 166.4M6.7 189.8Q10.6 194.0 15.4 199.5M2.4 188.8Q-3.9 190.6 -10.1 193.9M5.3 185.2Q3.8 179.6 7.2 173.9M7.7 196.9Q0.7 196.7 -5.4 200.5M12.5 193.5Q13.5 189.0 18.5 184.9M13.1 198.0Q19.6 204.2 25.5 208.3M46.3 175.2Q39.9 171.7 32.4 168.7M51.6 177.6Q57.5 182.1 62.8 182.4M66.0 170.8Q73.3 166.7 79.4 167.1M60.8 172.1Q51.9 171.8 43.5 175.8M62.2 191.0Q62.9 187.2 60.7 182.9M64.5 196.1Q66.9 200.7 70.4 203.8M37.5 208.9Q44.9 215.1 48.5 222.9M32.5 206.9Q28.8 208.9 23.3 208.2M35.7 203.4Q37.4 194.3 36.4 185.4M145.9 181.8Q143.0 174.7 146.2 166.8M143.2 188.4Q140.0 191.3 136.2 196.3M113.3 208.9Q111.2 216.9 112.5 224.9M113.0 201.0Q111.0 197.2 112.0 191.9M99.7 222.4Q95.6 225.8 87.7 232.2M104.3 218.9Q111.6 215.1 115.8 210.8M79.6 235.9Q86.0 231.4 93.6 229.6M78.4 239.9Q81.6 243.0 83.8 249.1M74.3 239.1Q70.9 245.2 63.8 247.5M75.0 234.6Q72.7 231.0 69.9 227.0M25.4 247.8Q22.8 245.8 18.9 243.2M29.6 247.2Q34.2 238.2 41.1 233.0M29.0 252.1Q29.7 259.3 34.5 265.0M122.6 251.0Q125.2 250.3 127.2 247.0M122.0 255.0Q125.3 261.0 129.3 266.3M118.0 253.2Q115.0 255.3 110.4 254.3M140.5 272.3Q138.3 275.0 136.6 276.8M144.9 268.6Q151.6 261.7 160.5 259.2M39.0 279.9Q37.0 275.6 33.8 270.9M42.2 279.8Q47.6 274.5 48.1 267.8M42.9 285.4Q47.2 289.7 50.7 294.7M37.5 283.7Q35.3 285.3 31.9 285.2M26.0 298.3Q24.2 300.3 24.6 304.6M28.3 292.2Q28.4 289.2 32.4 284.9M51.4 299.9Q45.6 299.8 39.3 301.3M54.7 296.4Q56.4 293.1 55.2 288.5M57.0 297.6Q60.5 297.0 63.6 292.7M55.0 302.6Q54.0 306.8 56.5 311.9M23.1 307.0Q12.5 308.7 5.7 314.5M26.4 304.9Q31.6 298.7 35.9 296.5M99.1 297.8Q92.7 300.5 86.2 300.0M104.7 296.5Q107.4 294.7 110.7 294.8M126.7 295.6Q127.3 298.3 131.6 300.8M121.6 292.6Q118.9 293.5 114.9 291.0M146.5 289.9Q142.5 283.2 139.9 278.3M147.3 295.2Q148.3 303.4 143.3 312.3M30.6 312.7Q32.1 309.1 36.5 307.3M28.5 317.5Q27.6 326.1 28.6 334.0M25.7 315.3Q22.0 317.9 16.8 317.3M28.2 311.8Q27.1 308.2 27.4 303.8M74.0 318.8Q71.9 318.7 69.2 321.5M79.2 315.4Q84.4 310.3 89.6 307.1M137.9 318.3Q143.2 318.1 149.1 319.5M133.9 320.6Q133.0 325.6 129.0 332.3M132.2 318.6Q124.4 323.7 116.0 322.2M134.8 315.1Q137.1 307.7 133.1 299.4M161.1 313.8Q164.7 320.6 172.8 325.7M156.2 311.7Q150.0 313.5 143.9 311.6M160.2 309.1Q162.0 299.3 167.1 292.2M31.4 322.0Q32.9 312.1 33.2 303.3M34.3 324.9Q36.7 326.0 40.5 324.4M30.1 328.0Q27.6 333.1 26.4 338.2M28.1 325.4Q22.8 327.5 17.2 326.4M277.6 168.9Q277.2 175.9 279.5 182.0M275.0 166.6Q269.5 167.9 264.4 166.1M277.8 164.5Q281.1 156.3 281.3 149.9M279.5 166.3Q288.5 162.4 295.8 163.5M197.7 204.0Q194.1 198.6 192.4 193.8M202.9 207.8Q208.9 211.6 215.8 210.0M197.4 210.1Q194.6 216.1 190.2 220.8M190.7 212.8Q188.3 220.9 181.6 229.2M191.5 207.0Q189.5 204.4 189.7 200.3M316.1 192.1Q312.5 197.9 305.6 201.1M318.4 186.9Q318.1 185.0 318.4 181.6M320.5 192.3Q324.0 196.5 328.6 201.1M316.6 198.6Q316.7 200.3 315.1 203.8M318.0 193.4Q320.5 187.3 321.2 180.3M315.3 210.1Q318.2 202.8 318.4 194.7M317.8 213.2Q324.8 212.1 331.6 213.2M314.8 216.3Q315.2 218.8 315.1 222.5M311.5 213.1Q304.6 213.3 297.8 212.6M332.1 218.1Q337.2 222.7 343.1 223.8M327.1 218.2Q324.4 219.2 318.7 223.1M329.6 213.8Q328.7 211.1 329.6 207.2M176.3 227.6Q178.0 223.0 183.5 217.8M177.5 230.8Q185.0 233.5 192.0 234.3M172.9 232.8Q170.3 236.5 166.8 243.3M171.4 230.4Q164.0 229.4 157.0 231.8M261.2 226.1Q259.5 218.6 260.9 211.8M262.7 231.0Q263.0 233.5 266.2 236.4M267.3 228.1Q264.9 230.9 264.0 235.9M266.3 224.0Q264.0 221.9 259.7 218.8M269.3 223.1Q271.3 220.6 271.7 216.4M270.3 227.5Q274.4 230.6 278.8 235.8M222.4 262.0Q215.3 267.9 211.2 273.2M226.5 256.2Q227.0 251.9 231.6 245.3M251.4 262.1Q252.2 255.7 250.6 248.3M254.1 269.3Q255.7 274.0 260.7 277.8M248.1 267.9Q243.0 270.8 236.3 273.7M258.3 264.1Q257.6 259.4 253.1 255.7M261.2 264.0Q267.1 257.0 267.8 248.9M262.6 268.3Q269.8 269.2 277.1 276.2M258.8 269.7Q254.2 279.3 252.2 286.7M175.7 290.7Q173.2 287.4 170.5 284.9M180.4 293.4Q185.6 295.0 190.9 295.5M180.9 303.2Q178.9 296.3 172.7 291.5M185.3 304.1Q188.5 302.4 191.8 300.1M184.6 308.2Q186.2 312.7 191.3 317.0M181.4 308.6Q181.2 311.9 177.9 315.9M186.2 306.5Q178.1 306.2 171.7 301.9M191.4 307.3Q199.4 306.1 207.0 307.3M277.0 315.8Q269.0 311.5 262.7 306.9M281.7 315.4Q283.9 314.1 286.3 311.3M282.4 317.1Q289.4 319.1 296.0 316.0M278.9 320.1Q276.6 330.1 274.8 338.5M308.9 314.3Q316.1 319.4 321.9 320.3M304.2 313.1Q297.9 311.2 292.0 312.2M321.6 310.6Q323.2 314.2 321.1 318.8M322.0 304.0Q321.5 298.9 322.8 292.4M318.2 315.8Q318.5 321.7 314.7 327.1M316.9 310.6Q316.4 309.7 312.3 305.8M321.9 311.4Q326.4 308.7 331.1 306.6M321.5 314.8Q326.5 316.0 329.8 321.3M323.6 305.0Q319.8 297.6 312.4 292.5M327.3 306.1Q335.1 304.7 341.4 302.5M324.4 308.7Q322.3 312.9 321.5 317.0M326.3 322.7Q328.1 324.5 331.6 324.4M321.5 319.7Q319.2 315.3 314.3 312.4M175.3 320.2Q173.8 317.3 176.1 313.0M178.2 322.9Q184.5 321.7 190.7 320.5M175.7 326.8Q175.7 334.8 179.4 342.6M171.6 323.7Q167.1 323.1 161.3 324.4M361.3 168.5Q356.1 160.9 351.7 153.1M363.8 168.1Q363.2 161.4 366.2 154.8M366.7 171.9Q367.9 170.9 371.2 172.3M360.1 173.4Q357.9 175.4 355.2 176.2M430.4 173.1Q427.9 178.1 427.8 184.4M431.1 167.8Q432.6 159.6 431.5 152.0M436.4 173.4Q433.5 178.5 432.4 185.1M438.9 168.8Q439.3 166.1 442.8 164.1M433.9 173.7Q431.7 168.8 431.1 163.8M437.9 176.9Q446.5 176.0 454.5 177.8M434.7 179.8Q434.5 187.5 434.0 194.8M431.7 176.5Q429.3 177.5 425.2 176.1M449.1 196.7Q444.0 194.7 438.4 195.3M453.3 193.7Q454.6 190.3 455.1 185.5M453.9 200.5Q454.1 206.7 458.5 212.4M334.6 213.2Q337.1 210.5 340.2 205.3M332.1 217.9Q328.6 224.0 326.5 231.7M468.0 216.2Q469.4 220.0 470.4 224.4M465.5 210.5Q458.3 201.6 456.9 195.5M470.2 213.2Q479.1 211.5 487.2 213.1M466.6 217.2Q464.7 212.4 466.6 207.2M469.5 219.7Q473.1 221.0 477.4 218.8M468.4 222.3Q472.0 227.6 477.0 232.9M464.4 222.0Q460.7 223.6 457.8 227.6M422.3 226.2Q417.7 225.4 413.0 223.5M427.8 224.9Q431.3 221.8 433.8 219.1M426.3 230.4Q428.2 232.9 428.3 237.6M433.4 227.9Q430.6 231.7 430.2 237.3M431.2 225.0Q421.8 222.3 413.4 225.1M434.7 221.9Q433.2 216.3 436.1 210.6M437.4 224.3Q441.4 221.7 446.0 222.3M424.2 233.6Q429.8 234.2 435.6 237.2M418.6 232.1Q414.0 229.7 407.8 229.8M429.6 234.2Q431.3 232.2 434.8 231.5M428.9 237.6Q430.3 240.2 432.5 242.4M424.7 236.2Q414.5 242.0 406.8 241.2M426.9 232.8Q424.3 227.4 425.4 222.0M444.6 236.5Q442.8 239.3 443.5 243.0M442.9 232.3Q434.9 228.4 429.0 222.1M447.7 234.2Q450.8 236.2 455.4 235.2M370.0 256.6Q377.4 256.8 386.2 253.1M364.1 258.5Q356.8 263.6 351.3 264.0M414.6 261.5Q413.8 264.8 415.1 269.1M415.4 255.4Q417.8 248.5 420.4 242.3M464.9 262.7Q467.7 263.8 470.1 267.7M459.5 260.9Q457.7 261.9 454.5 261.3M462.0 257.5Q458.0 248.0 458.2 240.0M436.8 263.8Q437.7 260.0 442.4 253.7M435.0 268.8Q434.1 276.2 432.8 282.7M433.4 264.5Q429.0 262.3 423.9 257.1M391.3 265.9Q391.0 261.1 386.8 255.7M393.9 271.6Q397.2 275.0 398.5 281.3M347.7 308.9Q348.8 305.8 350.4 302.2M348.2 314.3Q348.3 315.4 351.9 319.6M343.9 313.6Q339.1 317.9 332.3 321.8M343.5 310.7Q339.6 309.9 335.5 307.8M407.2 326.8Q410.2 329.2 413.4 329.5M404.6 328.4Q405.4 336.0 403.6 343.9M402.5 324.4Q394.3 322.0 388.3 315.8M354.3 326.2Q356.6 321.8 360.1 319.2M352.0 331.3Q352.7 335.1 350.7 340.2M414.6 327.5Q414.4 323.1 417.4 319.4M416.1 330.1Q422.8 330.1 428.4 333.0M413.4 331.7Q409.5 339.9 409.7 347.0M411.7 329.9Q408.5 330.8 405.1 331.1M60.2 332.5Q64.0 330.6 69.1 327.5M58.1 336.4Q58.6 339.3 58.6 343.0M56.2 335.9Q52.7 341.7 47.1 347.3M57.7 331.1Q58.2 328.7 57.5 325.3M84.7 342.9Q77.6 348.4 68.0 351.4M88.4 338.9Q94.4 331.7 95.0 323.6M150.3 336.2Q146.2 332.1 144.2 329.0M154.1 336.7Q156.5 334.5 158.8 333.3M152.8 340.8Q153.3 343.1 154.8 347.0M101.0 352.1Q101.5 353.9 99.3 357.4M99.1 348.7Q97.2 348.1 93.9 347.6M104.5 348.0Q109.8 346.4 117.6 340.8M59.1 355.2Q62.5 360.7 66.5 364.5M55.6 355.1Q52.6 357.4 50.9 360.3M55.6 351.1Q53.5 348.2 50.0 344.7M59.7 351.7Q65.9 347.3 75.5 342.0M106.4 361.4Q100.0 360.0 93.9 363.4M108.4 358.3Q106.2 353.7 106.2 348.5M111.3 359.5Q121.1 356.8 127.4 349.3M109.5 363.6Q114.3 372.7 112.8 380.4M20.5 363.6Q25.2 359.7 29.2 356.8M19.3 368.1Q20.5 370.4 21.6 373.7M16.4 367.6Q13.4 369.4 12.0 373.2M18.3 362.5Q20.3 355.6 18.6 348.5M71.9 383.0Q75.7 383.6 80.4 386.2M66.8 381.4Q57.5 380.7 49.2 376.8M146.2 383.8Q148.2 382.9 151.9 382.8M144.2 386.9Q143.4 389.6 145.7 392.9M141.2 383.0Q138.8 380.6 135.4 380.0M143.6 381.6Q145.8 375.5 143.9 369.1M150.3 391.2Q150.1 393.5 150.4 397.3M147.3 387.0Q141.5 386.5 135.2 382.6M151.6 385.3Q154.2 380.5 156.5 375.1M153.3 388.7Q157.6 388.4 162.3 390.6M132.6 390.9Q130.8 388.9 125.2 383.9M137.3 390.7Q139.5 387.0 143.5 383.9M137.7 395.2Q141.2 395.6 143.8 400.0M134.0 396.3Q132.7 402.2 129.6 408.8M156.2 424.3Q152.5 430.9 145.2 434.8M157.7 419.1Q153.6 411.8 153.9 404.3M160.5 419.8Q165.8 415.8 169.9 409.0M159.6 425.0Q160.6 431.0 164.2 436.2M1.9 448.5Q-1.0 455.4 -1.5 461.8M-0.4 444.7Q-5.3 445.4 -10.7 442.2M5.4 444.0Q12.5 441.6 21.8 434.8M91.4 441.9Q95.0 438.7 99.2 435.4M89.2 447.0Q89.9 451.2 89.7 456.0M85.9 443.5Q81.8 441.4 76.6 442.3M147.9 454.3Q143.5 458.8 141.2 463.7M148.8 447.3Q149.1 445.0 146.3 440.5M153.1 453.8Q158.3 457.1 162.1 462.5M8.6 478.3Q10.9 478.9 14.4 477.0M7.1 481.2Q10.5 487.8 11.7 493.4M3.9 478.1Q-4.4 475.9 -12.5 473.2M13.1 485.4Q8.5 488.3 6.1 492.6M14.1 480.6Q12.8 478.1 11.9 474.5M18.0 483.9Q23.8 487.8 30.8 486.7M22.2 486.8Q13.8 488.4 6.3 492.6M26.1 482.0Q26.0 480.0 27.0 476.4M29.2 485.5Q32.9 486.2 37.9 485.5M49.9 480.2Q52.3 470.3 48.8 461.5M53.1 482.7Q57.2 481.9 61.9 480.9M49.0 486.2Q47.4 489.1 46.4 493.2M60.1 474.8Q53.9 473.2 47.0 466.4M63.5 473.8Q67.4 468.0 70.3 460.1M62.8 478.8Q64.9 481.2 64.1 485.4M65.9 473.6Q62.0 473.3 57.3 473.3M71.7 475.2Q77.7 476.2 83.2 481.2M155.1 478.5Q153.4 476.9 150.1 477.8M161.8 479.2Q167.1 481.3 172.9 480.4M182.3 347.5Q186.0 348.4 191.1 350.7M180.1 349.5Q182.7 353.5 182.3 357.8M176.3 346.0Q171.7 345.8 166.6 344.4M178.2 343.6Q175.5 334.2 172.0 327.4M183.3 360.0Q187.1 360.7 191.5 360.7M179.0 362.3Q177.1 364.0 176.3 366.8M179.7 357.0Q180.2 352.9 177.4 348.7M287.7 343.8Q290.7 351.3 290.1 358.7M288.2 338.2Q291.6 332.2 292.0 326.9M306.2 348.3Q306.3 349.6 309.1 352.4M302.5 343.3Q301.3 340.2 296.8 335.6M332.7 349.9Q341.9 348.4 349.8 350.5M330.0 352.2Q330.6 356.9 329.0 361.7M328.2 348.5Q323.1 344.9 319.5 342.9M330.2 347.4Q331.6 342.9 330.2 338.0M195.4 382.9Q192.1 383.7 187.6 382.2M199.7 379.7Q201.6 373.1 202.6 366.8M201.4 385.8Q202.3 388.4 206.4 391.1M191.4 392.8Q196.2 393.4 202.4 393.7M188.6 395.6Q191.3 401.6 190.0 407.6M185.2 392.0Q183.1 390.9 179.1 391.0M189.0 389.5Q190.1 387.5 190.3 384.4M322.1 391.5Q319.6 394.6 318.9 398.1M326.2 387.2Q328.6 385.4 331.8 383.9M326.0 391.7Q321.4 384.3 322.1 376.8M329.2 395.3Q334.5 398.7 339.3 399.2M326.6 397.0Q325.7 404.1 326.4 411.1M324.3 393.1Q320.9 390.4 317.4 389.4M181.2 407.5Q176.3 414.5 173.7 419.7M181.1 402.6Q178.9 399.5 175.5 394.2M183.4 402.2Q187.4 393.4 187.8 384.9M185.5 405.5Q187.8 405.0 191.1 406.5M194.9 409.5Q196.4 415.9 199.2 421.3M190.7 406.6Q187.1 406.5 182.6 406.6M196.2 404.6Q202.2 402.2 207.2 395.5M273.6 396.9Q275.3 395.0 280.3 390.4M270.1 400.9Q269.3 403.5 266.6 405.7M270.2 407.8Q271.5 416.1 267.6 423.7M268.2 405.0Q260.2 405.1 252.4 402.4M271.5 403.2Q274.8 395.2 278.5 385.7M229.3 413.7Q220.9 411.8 213.0 410.3M232.9 411.3Q234.2 408.3 234.4 403.7M235.3 415.2Q241.2 419.1 246.5 418.6M231.3 417.3Q230.9 423.7 227.0 429.3M200.8 419.7Q206.3 428.8 206.8 437.3M197.3 418.4Q192.2 420.8 185.0 425.1M199.5 414.1Q200.0 408.8 198.3 402.3M202.7 417.3Q205.6 418.3 209.6 418.0M226.6 424.1Q228.6 419.8 232.4 413.2M222.2 429.5Q217.8 433.4 210.5 439.0M209.8 473.8Q215.4 475.9 220.6 476.1M208.7 475.5Q214.1 481.5 215.8 485.3M204.6 474.2Q202.0 473.6 198.1 476.4M205.9 470.9Q203.6 466.3 200.7 460.6M209.6 479.8Q219.1 476.2 227.9 479.1M203.9 482.8Q197.6 491.8 192.6 497.0M202.8 478.5Q197.9 476.2 193.3 474.0M205.9 476.4Q206.6 467.5 205.2 459.1M317.8 493.0Q313.5 491.6 310.8 487.0M321.6 493.7Q330.1 488.5 338.2 487.8M320.6 496.4Q322.2 503.7 328.7 512.1M317.4 495.2Q308.0 499.4 301.0 500.8M357.8 333.3Q354.1 329.6 351.8 327.4M360.7 338.1Q363.6 341.3 363.4 346.3M411.0 334.2Q416.7 332.8 422.4 334.2M410.0 336.1Q411.8 343.7 418.7 349.5M406.7 335.0Q403.6 337.6 399.5 337.9M408.0 332.1Q408.1 326.2 403.9 321.5M409.2 343.8Q408.5 345.7 410.0 348.9M406.1 339.7Q400.8 336.6 396.1 335.0M410.6 338.7Q413.4 334.3 417.6 330.2M375.8 345.6Q382.1 338.6 388.6 336.8M373.5 349.8Q372.9 357.6 373.2 364.6M371.0 347.8Q364.8 349.1 358.8 350.7M373.2 344.5Q372.3 341.1 372.0 337.1M375.2 370.5Q375.5 362.9 374.4 355.7M374.2 375.6Q369.9 384.2 366.1 392.4M392.6 378.1Q398.6 372.1 401.8 368.2M390.6 383.8Q393.4 391.1 391.8 398.1M387.1 379.7Q377.8 379.3 369.8 375.3M381.8 377.6Q378.4 381.4 377.4 385.1M381.9 374.5Q375.3 367.3 372.8 358.6M384.4 376.8Q389.1 379.1 393.2 380.8M334.3 392.6Q328.5 388.7 320.5 385.8M339.3 395.5Q344.3 397.8 351.3 403.9M453.7 389.3Q445.9 382.8 440.6 381.6M458.3 388.1Q460.4 385.9 461.4 382.9M459.9 390.9Q469.5 392.9 478.0 390.7M456.8 394.3Q460.1 402.0 457.5 409.8M473.9 399.7Q482.7 401.3 490.2 407.9M469.8 401.2Q468.9 407.7 462.6 417.2M469.4 395.7Q468.7 393.7 466.0 390.2M489.4 402.4Q489.1 394.2 486.5 387.1M493.1 405.8Q497.7 408.4 503.1 406.9M487.0 406.5Q485.0 408.2 481.9 408.3M344.1 410.2Q342.0 412.3 341.1 414.7M342.9 406.6Q335.2 401.4 329.1 401.8M347.1 404.8Q350.4 396.4 353.6 390.3M348.8 408.4Q351.1 410.4 355.6 410.1M449.3 411.9Q445.3 418.5 442.0 426.4M449.3 404.7Q442.5 397.4 441.9 389.1M452.9 404.8Q456.8 401.1 457.9 394.9M454.8 409.7Q456.5 411.1 460.9 412.0M370.3 419.9Q376.6 414.7 382.9 412.6M367.6 424.6Q368.4 430.6 367.7 436.7M364.5 421.9Q361.7 423.2 357.9 422.8M426.3 425.8Q426.8 420.8 422.7 414.9M430.3 429.5Q436.1 429.3 441.7 431.9M424.3 429.7Q417.6 430.4 411.4 433.6M441.3 446.8Q443.1 452.7 442.3 458.7M441.6 440.6Q446.8 430.9 444.6 422.6M424.3 447.5Q425.9 444.6 428.4 440.7M425.2 451.5Q431.3 454.4 439.0 460.0M420.0 450.8Q417.8 450.2 413.3 453.1M420.8 447.9Q418.6 445.2 413.6 440.6M365.8 460.0Q364.2 452.7 360.5 446.7M370.7 463.5Q375.8 465.5 382.2 464.2M366.2 466.7Q366.6 468.6 364.4 473.0M363.6 463.5Q359.0 462.3 353.5 464.0M338.3 469.4Q330.5 467.5 323.6 466.6M343.7 472.0Q353.0 476.3 357.8 483.8M489.7 474.6Q484.8 471.0 480.0 471.3M494.2 477.3Q498.3 484.2 505.8 487.5M354.1 486.5Q354.9 482.8 359.6 480.1M353.1 491.8Q357.3 498.7 358.1 505.7M348.9 488.5Q342.7 486.9 335.7 487.1M404.7 492.1Q407.3 493.6 407.9 497.9M404.0 486.3Q406.9 479.7 407.4 473.8M449.7 486.4Q445.1 483.5 437.8 478.1M453.1 485.7Q458.6 478.2 461.8 472.3M452.0 490.2Q454.6 495.3 453.2 500.4M427.2 496.9Q432.0 501.9 440.4 507.1M424.2 493.7Q416.2 486.2 414.3 478.7" fill="none" stroke="#08006e" stroke-width=".7" opacity=".75"/>
<g fill="#08003c" opacity=".78" filter="url(#hb)"><circle cx="40.7" cy="1.8" r="5.1"/><circle cx="96.1" cy="10.7" r="5.9"/><circle cx="109.0" cy="8.9" r="5.1"/><circle cx="128.6" cy="1.1" r="4.2"/><circle cx="144.2" cy="4.5" r="5.9"/><circle cx="73.9" cy="18.9" r="5.9"/><circle cx="74.5" cy="28.5" r="5.9"/><circle cx="163.6" cy="20.0" r="4.2"/><circle cx="124.2" cy="44.1" r="5.1"/><circle cx="132.2" cy="42.3" r="5.9"/><circle cx="153.5" cy="39.6" r="5.1"/><circle cx="26.3" cy="50.3" r="5.9"/><circle cx="26.7" cy="59.6" r="5.9"/><circle cx="84.1" cy="91.2" r="5.9"/><circle cx="93.5" cy="109.5" r="5.1"/><circle cx="92.1" cy="117.0" r="5.5"/><circle cx="102.4" cy="114.6" r="3.4"/><circle cx="24.5" cy="131.3" r="4.2"/><circle cx="28.9" cy="144.2" r="5.9"/><circle cx="36.0" cy="143.5" r="5.1"/><circle cx="80.6" cy="138.4" r="5.1"/><circle cx="168.2" cy="20.0" r="5.1"/><circle cx="310.6" cy="28.9" r="5.5"/><circle cx="182.0" cy="57.4" r="4.7"/><circle cx="211.6" cy="61.2" r="6.3"/><circle cx="290.2" cy="63.4" r="5.9"/><circle cx="299.1" cy="70.1" r="5.1"/><circle cx="325.8" cy="66.8" r="5.1"/><circle cx="296.2" cy="78.3" r="5.5"/><circle cx="170.9" cy="86.3" r="5.9"/><circle cx="266.6" cy="127.9" r="5.1"/><circle cx="267.2" cy="138.4" r="5.9"/><circle cx="242.8" cy="142.4" r="5.9"/><circle cx="271.0" cy="148.0" r="4.2"/><circle cx="318.0" cy="129.1" r="5.5"/><circle cx="319.5" cy="148.0" r="5.5"/><circle cx="306.9" cy="154.7" r="5.9"/><circle cx="211.6" cy="153.5" r="5.9"/><circle cx="187.8" cy="158.4" r="5.9"/><circle cx="190.9" cy="153.1" r="3.4"/><circle cx="278.4" cy="161.3" r="5.9"/><circle cx="346.5" cy="4.5" r="5.1"/><circle cx="376.5" cy="1.1" r="4.2"/><circle cx="451.7" cy="8.5" r="5.1"/><circle cx="469.3" cy="11.1" r="5.1"/><circle cx="488.4" cy="23.4" r="4.7"/><circle cx="362.7" cy="22.3" r="4.2"/><circle cx="361.4" cy="33.8" r="6.3"/><circle cx="458.4" cy="40.1" r="5.1"/><circle cx="490.4" cy="40.5" r="5.1"/><circle cx="362.7" cy="49.4" r="5.1"/><circle cx="447.3" cy="50.1" r="4.7"/><circle cx="457.1" cy="51.6" r="5.1"/><circle cx="406.5" cy="53.4" r="6.8"/><circle cx="379.8" cy="68.5" r="5.5"/><circle cx="445.9" cy="67.2" r="5.5"/><circle cx="449.5" cy="71.7" r="5.1"/><circle cx="472.2" cy="72.3" r="5.9"/><circle cx="342.7" cy="80.1" r="5.9"/><circle cx="403.9" cy="79.7" r="5.1"/><circle cx="425.5" cy="86.3" r="4.7"/><circle cx="373.2" cy="86.8" r="6.3"/><circle cx="485.5" cy="83.4" r="5.9"/><circle cx="453.3" cy="91.7" r="5.1"/><circle cx="343.6" cy="111.3" r="6.8"/><circle cx="419.5" cy="128.4" r="5.9"/><circle cx="364.9" cy="133.5" r="6.8"/><circle cx="360.9" cy="139.7" r="4.2"/><circle cx="372.1" cy="139.7" r="6.8"/><circle cx="377.6" cy="140.2" r="3.4"/><circle cx="449.9" cy="142.9" r="5.1"/><circle cx="10.0" cy="177.1" r="5.1"/><circle cx="18.2" cy="181.1" r="5.1"/><circle cx="4.9" cy="187.8" r="5.1"/><circle cx="10.7" cy="196.0" r="5.9"/><circle cx="49.0" cy="176.5" r="5.5"/><circle cx="63.4" cy="171.6" r="5.1"/><circle cx="62.8" cy="193.8" r="5.5"/><circle cx="35.6" cy="206.5" r="5.9"/><circle cx="145.8" cy="185.6" r="7.2"/><circle cx="113.5" cy="204.9" r="7.6"/><circle cx="101.9" cy="220.5" r="5.5"/><circle cx="76.8" cy="237.2" r="5.9"/><circle cx="27.8" cy="249.4" r="5.5"/><circle cx="120.6" cy="252.8" r="5.1"/><circle cx="142.4" cy="270.1" r="5.5"/><circle cx="40.7" cy="282.8" r="6.3"/><circle cx="26.7" cy="295.1" r="6.3"/><circle cx="54.5" cy="299.5" r="5.9"/><circle cx="24.9" cy="306.2" r="3.8"/><circle cx="101.9" cy="297.3" r="5.5"/><circle cx="124.6" cy="293.3" r="5.9"/><circle cx="148.0" cy="292.4" r="5.5"/><circle cx="28.5" cy="314.6" r="5.5"/><circle cx="76.8" cy="317.3" r="5.9"/><circle cx="135.1" cy="318.0" r="5.5"/><circle cx="159.1" cy="311.8" r="5.5"/><circle cx="31.2" cy="325.1" r="5.9"/><circle cx="277.3" cy="166.7" r="4.2"/><circle cx="199.4" cy="207.2" r="6.8"/><circle cx="192.3" cy="210.1" r="5.9"/><circle cx="318.4" cy="190.0" r="5.9"/><circle cx="317.3" cy="196.0" r="5.1"/><circle cx="314.6" cy="213.2" r="5.9"/><circle cx="329.6" cy="216.7" r="5.5"/><circle cx="174.5" cy="230.1" r="5.9"/><circle cx="261.2" cy="228.8" r="5.1"/><circle cx="268.4" cy="225.6" r="5.1"/><circle cx="225.0" cy="259.5" r="6.8"/><circle cx="251.7" cy="266.1" r="7.6"/><circle cx="259.9" cy="266.8" r="5.9"/><circle cx="177.6" cy="292.8" r="5.5"/><circle cx="182.7" cy="305.7" r="5.9"/><circle cx="188.7" cy="307.3" r="5.1"/><circle cx="279.5" cy="317.3" r="5.5"/><circle cx="306.6" cy="313.3" r="4.7"/><circle cx="321.8" cy="307.3" r="6.3"/><circle cx="319.1" cy="312.9" r="5.9"/><circle cx="325.1" cy="306.6" r="4.2"/><circle cx="323.5" cy="321.8" r="5.5"/><circle cx="174.9" cy="323.5" r="6.3"/><circle cx="363.2" cy="171.6" r="6.8"/><circle cx="431.0" cy="170.5" r="5.1"/><circle cx="437.3" cy="170.9" r="5.1"/><circle cx="434.8" cy="176.7" r="5.9"/><circle cx="452.6" cy="197.2" r="6.8"/><circle cx="333.1" cy="215.4" r="5.1"/><circle cx="467.1" cy="213.2" r="5.9"/><circle cx="466.6" cy="220.1" r="5.5"/><circle cx="425.5" cy="227.2" r="6.3"/><circle cx="434.4" cy="225.0" r="5.9"/><circle cx="421.5" cy="232.8" r="5.5"/><circle cx="427.2" cy="235.4" r="5.1"/><circle cx="445.0" cy="233.9" r="5.1"/><circle cx="366.9" cy="257.2" r="5.9"/><circle cx="414.3" cy="258.3" r="5.9"/><circle cx="462.6" cy="260.6" r="5.9"/><circle cx="435.5" cy="266.1" r="5.1"/><circle cx="392.5" cy="268.8" r="5.9"/><circle cx="346.5" cy="311.8" r="5.9"/><circle cx="404.8" cy="325.8" r="5.1"/><circle cx="352.5" cy="328.4" r="5.5"/><circle cx="413.9" cy="329.6" r="4.2"/><circle cx="57.9" cy="333.8" r="5.1"/><circle cx="87.2" cy="341.6" r="5.5"/><circle cx="152.0" cy="338.2" r="5.1"/><circle cx="101.9" cy="349.4" r="5.5"/><circle cx="57.4" cy="353.1" r="5.1"/><circle cx="109.0" cy="360.9" r="5.1"/><circle cx="18.2" cy="365.4" r="5.5"/><circle cx="69.4" cy="382.1" r="5.1"/><circle cx="143.5" cy="384.3" r="5.1"/><circle cx="150.2" cy="388.1" r="5.9"/><circle cx="135.1" cy="393.2" r="6.3"/><circle cx="158.4" cy="422.1" r="5.9"/><circle cx="2.7" cy="445.5" r="5.9"/><circle cx="89.0" cy="443.9" r="5.9"/><circle cx="150.2" cy="451.0" r="7.6"/><circle cx="6.2" cy="478.9" r="4.7"/><circle cx="15.1" cy="483.3" r="5.5"/><circle cx="25.6" cy="485.5" r="6.8"/><circle cx="50.1" cy="483.3" r="5.9"/><circle cx="62.3" cy="476.2" r="5.1"/><circle cx="69.0" cy="473.7" r="5.9"/><circle cx="158.4" cy="478.9" r="6.3"/><circle cx="179.4" cy="346.5" r="5.9"/><circle cx="180.5" cy="359.8" r="5.5"/><circle cx="287.3" cy="340.9" r="5.5"/><circle cx="304.4" cy="345.8" r="5.9"/><circle cx="330.2" cy="349.8" r="4.7"/><circle cx="198.9" cy="383.2" r="6.8"/><circle cx="188.3" cy="392.5" r="5.9"/><circle cx="323.5" cy="388.7" r="5.9"/><circle cx="326.7" cy="394.3" r="5.1"/><circle cx="182.7" cy="405.0" r="5.5"/><circle cx="193.8" cy="406.5" r="5.9"/><circle cx="271.7" cy="398.8" r="5.1"/><circle cx="270.6" cy="405.4" r="4.7"/><circle cx="232.3" cy="414.3" r="5.9"/><circle cx="199.8" cy="417.0" r="5.5"/><circle cx="225.0" cy="427.2" r="6.8"/><circle cx="207.2" cy="473.3" r="5.1"/><circle cx="206.1" cy="480.0" r="6.8"/><circle cx="319.5" cy="494.4" r="4.2"/><circle cx="359.8" cy="335.3" r="5.5"/><circle cx="408.8" cy="334.2" r="4.2"/><circle cx="408.8" cy="340.9" r="5.5"/><circle cx="373.6" cy="347.1" r="5.1"/><circle cx="375.4" cy="373.2" r="5.1"/><circle cx="390.3" cy="380.5" r="6.3"/><circle cx="382.7" cy="376.1" r="3.4"/><circle cx="336.9" cy="393.9" r="5.5"/><circle cx="456.6" cy="391.0" r="6.3"/><circle cx="471.1" cy="398.3" r="5.9"/><circle cx="490.0" cy="405.4" r="5.9"/><circle cx="345.8" cy="407.7" r="5.9"/><circle cx="451.0" cy="408.3" r="7.6"/><circle cx="367.6" cy="421.5" r="5.9"/><circle cx="427.2" cy="428.8" r="5.9"/><circle cx="441.0" cy="443.7" r="5.9"/><circle cx="422.8" cy="449.9" r="5.5"/><circle cx="367.2" cy="463.3" r="6.8"/><circle cx="341.3" cy="470.0" r="5.9"/><circle cx="492.2" cy="475.5" r="5.1"/><circle cx="352.0" cy="488.9" r="5.9"/><circle cx="403.2" cy="489.3" r="5.9"/><circle cx="451.7" cy="487.8" r="4.7"/><circle cx="425.5" cy="495.6" r="4.2"/></g>
<g filter="url(#nbz)"><circle cx="40.7" cy="1.8" r="3.1" fill="url(#nb)"/><circle cx="96.1" cy="10.7" r="3.6" fill="url(#nb)"/><circle cx="109.0" cy="8.9" r="3.1" fill="url(#nb)"/><circle cx="128.6" cy="1.1" r="2.6" fill="url(#nb)"/><circle cx="144.2" cy="4.5" r="3.6" fill="url(#nd)"/><circle cx="73.9" cy="18.9" r="3.6" fill="url(#nr)"/><circle cx="74.5" cy="28.5" r="3.6" fill="url(#nd)"/><circle cx="163.6" cy="20.0" r="2.6" fill="url(#nm)"/><circle cx="124.2" cy="44.1" r="3.1" fill="url(#nb)"/><circle cx="132.2" cy="42.3" r="3.6" fill="url(#nb)"/><circle cx="153.5" cy="39.6" r="3.1" fill="url(#nm)"/><circle cx="26.3" cy="50.3" r="3.6" fill="url(#nb)"/><circle cx="26.7" cy="59.6" r="3.6" fill="url(#nb)"/><circle cx="84.1" cy="91.2" r="3.6" fill="url(#nb)"/><circle cx="93.5" cy="109.5" r="3.1" fill="url(#nm)"/><circle cx="92.1" cy="117.0" r="3.3" fill="url(#nb)"/><circle cx="102.4" cy="114.6" r="2.0" fill="url(#nm)"/><circle cx="24.5" cy="131.3" r="2.6" fill="url(#nr)"/><circle cx="28.9" cy="144.2" r="3.6" fill="url(#nm)"/><circle cx="36.0" cy="143.5" r="3.1" fill="url(#nm)"/><circle cx="80.6" cy="138.4" r="3.1" fill="url(#nb)"/><circle cx="168.2" cy="20.0" r="3.1" fill="url(#nb)"/><circle cx="310.6" cy="28.9" r="3.3" fill="url(#nm)"/><circle cx="182.0" cy="57.4" r="2.8" fill="url(#nm)"/><circle cx="211.6" cy="61.2" r="3.8" fill="url(#nb)"/><circle cx="290.2" cy="63.4" r="3.6" fill="url(#nm)"/><circle cx="299.1" cy="70.1" r="3.1" fill="url(#nb)"/><circle cx="325.8" cy="66.8" r="3.1" fill="url(#nb)"/><circle cx="296.2" cy="78.3" r="3.3" fill="url(#nm)"/><circle cx="170.9" cy="86.3" r="3.6" fill="url(#nb)"/><circle cx="266.6" cy="127.9" r="3.1" fill="url(#nm)"/><circle cx="267.2" cy="138.4" r="3.6" fill="url(#nd)"/><circle cx="242.8" cy="142.4" r="3.6" fill="url(#nm)"/><circle cx="271.0" cy="148.0" r="2.6" fill="url(#nr)"/><circle cx="318.0" cy="129.1" r="3.3" fill="url(#nb)"/><circle cx="319.5" cy="148.0" r="3.3" fill="url(#nm)"/><circle cx="306.9" cy="154.7" r="3.6" fill="url(#nm)"/><circle cx="211.6" cy="153.5" r="3.6" fill="url(#nb)"/><circle cx="187.8" cy="158.4" r="3.6" fill="url(#nb)"/><circle cx="190.9" cy="153.1" r="2.0" fill="url(#nb)"/><circle cx="278.4" cy="161.3" r="3.6" fill="url(#nd)"/><circle cx="346.5" cy="4.5" r="3.1" fill="url(#nb)"/><circle cx="376.5" cy="1.1" r="2.6" fill="url(#nb)"/><circle cx="451.7" cy="8.5" r="3.1" fill="url(#nm)"/><circle cx="469.3" cy="11.1" r="3.1" fill="url(#nm)"/><circle cx="488.4" cy="23.4" r="2.8" fill="url(#nd)"/><circle cx="362.7" cy="22.3" r="2.6" fill="url(#nm)"/><circle cx="361.4" cy="33.8" r="3.8" fill="url(#nb)"/><circle cx="458.4" cy="40.1" r="3.1" fill="url(#nb)"/><circle cx="490.4" cy="40.5" r="3.1" fill="url(#nd)"/><circle cx="362.7" cy="49.4" r="3.1" fill="url(#nb)"/><circle cx="447.3" cy="50.1" r="2.8" fill="url(#nm)"/><circle cx="457.1" cy="51.6" r="3.1" fill="url(#nr)"/><circle cx="406.5" cy="53.4" r="4.1" fill="url(#nb)"/><circle cx="379.8" cy="68.5" r="3.3" fill="url(#nm)"/><circle cx="445.9" cy="67.2" r="3.3" fill="url(#nb)"/><circle cx="449.5" cy="71.7" r="3.1" fill="url(#nb)"/><circle cx="472.2" cy="72.3" r="3.6" fill="url(#nd)"/><circle cx="342.7" cy="80.1" r="3.6" fill="url(#nm)"/><circle cx="403.9" cy="79.7" r="3.1" fill="url(#nb)"/><circle cx="425.5" cy="86.3" r="2.8" fill="url(#nm)"/><circle cx="373.2" cy="86.8" r="3.8" fill="url(#nd)"/><circle cx="485.5" cy="83.4" r="3.6" fill="url(#nb)"/><circle cx="453.3" cy="91.7" r="3.1" fill="url(#nm)"/><circle cx="343.6" cy="111.3" r="4.1" fill="url(#nb)"/><circle cx="419.5" cy="128.4" r="3.6" fill="url(#nb)"/><circle cx="364.9" cy="133.5" r="4.1" fill="url(#nb)"/><circle cx="360.9" cy="139.7" r="2.6" fill="url(#nr)"/><circle cx="372.1" cy="139.7" r="4.1" fill="url(#nb)"/><circle cx="377.6" cy="140.2" r="2.0" fill="url(#nb)"/><circle cx="449.9" cy="142.9" r="3.1" fill="url(#nb)"/><circle cx="10.0" cy="177.1" r="3.1" fill="url(#nr)"/><circle cx="18.2" cy="181.1" r="3.1" fill="url(#nm)"/><circle cx="4.9" cy="187.8" r="3.1" fill="url(#nr)"/><circle cx="10.7" cy="196.0" r="3.6" fill="url(#nm)"/><circle cx="49.0" cy="176.5" r="3.3" fill="url(#nm)"/><circle cx="63.4" cy="171.6" r="3.1" fill="url(#nm)"/><circle cx="62.8" cy="193.8" r="3.3" fill="url(#nm)"/><circle cx="35.6" cy="206.5" r="3.6" fill="url(#nr)"/><circle cx="145.8" cy="185.6" r="4.4" fill="url(#nb)"/><circle cx="113.5" cy="204.9" r="4.6" fill="url(#nb)"/><circle cx="101.9" cy="220.5" r="3.3" fill="url(#nb)"/><circle cx="76.8" cy="237.2" r="3.6" fill="url(#nb)"/><circle cx="27.8" cy="249.4" r="3.3" fill="url(#nr)"/><circle cx="120.6" cy="252.8" r="3.1" fill="url(#nd)"/><circle cx="142.4" cy="270.1" r="3.3" fill="url(#nr)"/><circle cx="40.7" cy="282.8" r="3.8" fill="url(#nm)"/><circle cx="26.7" cy="295.1" r="3.8" fill="url(#nd)"/><circle cx="54.5" cy="299.5" r="3.6" fill="url(#nm)"/><circle cx="24.9" cy="306.2" r="2.3" fill="url(#nm)"/><circle cx="101.9" cy="297.3" r="3.3" fill="url(#nb)"/><circle cx="124.6" cy="293.3" r="3.6" fill="url(#nm)"/><circle cx="148.0" cy="292.4" r="3.3" fill="url(#nb)"/><circle cx="28.5" cy="314.6" r="3.3" fill="url(#nm)"/><circle cx="76.8" cy="317.3" r="3.6" fill="url(#nb)"/><circle cx="135.1" cy="318.0" r="3.3" fill="url(#nb)"/><circle cx="159.1" cy="311.8" r="3.3" fill="url(#nr)"/><circle cx="31.2" cy="325.1" r="3.6" fill="url(#nb)"/><circle cx="277.3" cy="166.7" r="2.6" fill="url(#nm)"/><circle cx="199.4" cy="207.2" r="4.1" fill="url(#nb)"/><circle cx="192.3" cy="210.1" r="3.6" fill="url(#nb)"/><circle cx="318.4" cy="190.0" r="3.6" fill="url(#nb)"/><circle cx="317.3" cy="196.0" r="3.1" fill="url(#nb)"/><circle cx="314.6" cy="213.2" r="3.6" fill="url(#nr)"/><circle cx="329.6" cy="216.7" r="3.3" fill="url(#nm)"/><circle cx="174.5" cy="230.1" r="3.6" fill="url(#nb)"/><circle cx="261.2" cy="228.8" r="3.1" fill="url(#nr)"/><circle cx="268.4" cy="225.6" r="3.1" fill="url(#nr)"/><circle cx="225.0" cy="259.5" r="4.1" fill="url(#nd)"/><circle cx="251.7" cy="266.1" r="4.6" fill="url(#nb)"/><circle cx="259.9" cy="266.8" r="3.6" fill="url(#nb)"/><circle cx="177.6" cy="292.8" r="3.3" fill="url(#nb)"/><circle cx="182.7" cy="305.7" r="3.6" fill="url(#nb)"/><circle cx="188.7" cy="307.3" r="3.1" fill="url(#nb)"/><circle cx="279.5" cy="317.3" r="3.3" fill="url(#nm)"/><circle cx="306.6" cy="313.3" r="2.8" fill="url(#nb)"/><circle cx="321.8" cy="307.3" r="3.8" fill="url(#nb)"/><circle cx="319.1" cy="312.9" r="3.6" fill="url(#nb)"/><circle cx="325.1" cy="306.6" r="2.6" fill="url(#nb)"/><circle cx="323.5" cy="321.8" r="3.3" fill="url(#nm)"/><circle cx="174.9" cy="323.5" r="3.8" fill="url(#nm)"/><circle cx="363.2" cy="171.6" r="4.1" fill="url(#nm)"/><circle cx="431.0" cy="170.5" r="3.1" fill="url(#nb)"/><circle cx="437.3" cy="170.9" r="3.1" fill="url(#nb)"/><circle cx="434.8" cy="176.7" r="3.6" fill="url(#nb)"/><circle cx="452.6" cy="197.2" r="4.1" fill="url(#nm)"/><circle cx="333.1" cy="215.4" r="3.1" fill="url(#nm)"/><circle cx="467.1" cy="213.2" r="3.6" fill="url(#nm)"/><circle cx="466.6" cy="220.1" r="3.3" fill="url(#nb)"/><circle cx="425.5" cy="227.2" r="3.8" fill="url(#nb)"/><circle cx="434.4" cy="225.0" r="3.6" fill="url(#nb)"/><circle cx="421.5" cy="232.8" r="3.3" fill="url(#nb)"/><circle cx="427.2" cy="235.4" r="3.1" fill="url(#nb)"/><circle cx="445.0" cy="233.9" r="3.1" fill="url(#nr)"/><circle cx="366.9" cy="257.2" r="3.6" fill="url(#nr)"/><circle cx="414.3" cy="258.3" r="3.6" fill="url(#nr)"/><circle cx="462.6" cy="260.6" r="3.6" fill="url(#nr)"/><circle cx="435.5" cy="266.1" r="3.1" fill="url(#nr)"/><circle cx="392.5" cy="268.8" r="3.6" fill="url(#nm)"/><circle cx="346.5" cy="311.8" r="3.6" fill="url(#nb)"/><circle cx="404.8" cy="325.8" r="3.1" fill="url(#nb)"/><circle cx="352.5" cy="328.4" r="3.3" fill="url(#nb)"/><circle cx="413.9" cy="329.6" r="2.6" fill="url(#nb)"/><circle cx="57.9" cy="333.8" r="3.1" fill="url(#nb)"/><circle cx="87.2" cy="341.6" r="3.3" fill="url(#nb)"/><circle cx="152.0" cy="338.2" r="3.1" fill="url(#nb)"/><circle cx="101.9" cy="349.4" r="3.3" fill="url(#nr)"/><circle cx="57.4" cy="353.1" r="3.1" fill="url(#nb)"/><circle cx="109.0" cy="360.9" r="3.1" fill="url(#nb)"/><circle cx="18.2" cy="365.4" r="3.3" fill="url(#nr)"/><circle cx="69.4" cy="382.1" r="3.1" fill="url(#nb)"/><circle cx="143.5" cy="384.3" r="3.1" fill="url(#nb)"/><circle cx="150.2" cy="388.1" r="3.6" fill="url(#nm)"/><circle cx="135.1" cy="393.2" r="3.8" fill="url(#nm)"/><circle cx="158.4" cy="422.1" r="3.6" fill="url(#nb)"/><circle cx="2.7" cy="445.5" r="3.6" fill="url(#nd)"/><circle cx="89.0" cy="443.9" r="3.6" fill="url(#nb)"/><circle cx="150.2" cy="451.0" r="4.6" fill="url(#nb)"/><circle cx="6.2" cy="478.9" r="2.8" fill="url(#nr)"/><circle cx="15.1" cy="483.3" r="3.3" fill="url(#nr)"/><circle cx="25.6" cy="485.5" r="4.1" fill="url(#nr)"/><circle cx="50.1" cy="483.3" r="3.6" fill="url(#nd)"/><circle cx="62.3" cy="476.2" r="3.1" fill="url(#nb)"/><circle cx="69.0" cy="473.7" r="3.6" fill="url(#nb)"/><circle cx="158.4" cy="478.9" r="3.8" fill="url(#nm)"/><circle cx="179.4" cy="346.5" r="3.6" fill="url(#nb)"/><circle cx="180.5" cy="359.8" r="3.3" fill="url(#nb)"/><circle cx="287.3" cy="340.9" r="3.3" fill="url(#nb)"/><circle cx="304.4" cy="345.8" r="3.6" fill="url(#nr)"/><circle cx="330.2" cy="349.8" r="2.8" fill="url(#nb)"/><circle cx="198.9" cy="383.2" r="4.1" fill="url(#nb)"/><circle cx="188.3" cy="392.5" r="3.6" fill="url(#nb)"/><circle cx="323.5" cy="388.7" r="3.6" fill="url(#nb)"/><circle cx="326.7" cy="394.3" r="3.1" fill="url(#nb)"/><circle cx="182.7" cy="405.0" r="3.3" fill="url(#nb)"/><circle cx="193.8" cy="406.5" r="3.6" fill="url(#nb)"/><circle cx="271.7" cy="398.8" r="3.1" fill="url(#nd)"/><circle cx="270.6" cy="405.4" r="2.8" fill="url(#nd)"/><circle cx="232.3" cy="414.3" r="3.6" fill="url(#nb)"/><circle cx="199.8" cy="417.0" r="3.3" fill="url(#nb)"/><circle cx="225.0" cy="427.2" r="4.1" fill="url(#nm)"/><circle cx="207.2" cy="473.3" r="3.1" fill="url(#nb)"/><circle cx="206.1" cy="480.0" r="4.1" fill="url(#nb)"/><circle cx="319.5" cy="494.4" r="2.6" fill="url(#nr)"/><circle cx="359.8" cy="335.3" r="3.3" fill="url(#nb)"/><circle cx="408.8" cy="334.2" r="2.6" fill="url(#nb)"/><circle cx="408.8" cy="340.9" r="3.3" fill="url(#nr)"/><circle cx="373.6" cy="347.1" r="3.1" fill="url(#nb)"/><circle cx="375.4" cy="373.2" r="3.1" fill="url(#nr)"/><circle cx="390.3" cy="380.5" r="3.8" fill="url(#nb)"/><circle cx="382.7" cy="376.1" r="2.0" fill="url(#nr)"/><circle cx="336.9" cy="393.9" r="3.3" fill="url(#nb)"/><circle cx="456.6" cy="391.0" r="3.8" fill="url(#nb)"/><circle cx="471.1" cy="398.3" r="3.6" fill="url(#nb)"/><circle cx="490.0" cy="405.4" r="3.6" fill="url(#nr)"/><circle cx="345.8" cy="407.7" r="3.6" fill="url(#nb)"/><circle cx="451.0" cy="408.3" r="4.6" fill="url(#nb)"/><circle cx="367.6" cy="421.5" r="3.6" fill="url(#nb)"/><circle cx="427.2" cy="428.8" r="3.6" fill="url(#nb)"/><circle cx="441.0" cy="443.7" r="3.6" fill="url(#nb)"/><circle cx="422.8" cy="449.9" r="3.3" fill="url(#nb)"/><circle cx="367.2" cy="463.3" r="4.1" fill="url(#nb)"/><circle cx="341.3" cy="470.0" r="3.6" fill="url(#nm)"/><circle cx="492.2" cy="475.5" r="3.1" fill="url(#nr)"/><circle cx="352.0" cy="488.9" r="3.6" fill="url(#nm)"/><circle cx="403.2" cy="489.3" r="3.6" fill="url(#nb)"/><circle cx="451.7" cy="487.8" r="2.8" fill="url(#nb)"/><circle cx="425.5" cy="495.6" r="2.6" fill="url(#nb)"/></g>
<text x="465" y="482" font-size="11" fill="#b4b4b4" font-family="DejaVu Sans, Liberation Sans, sans-serif">100</text><rect x="460.500" y="485.200" width="27" height="1.500" fill="#b4b4a4"/>
</svg>
<div class="sbar"><svg class="abs" style="left:4px;top:6px" width="16" height="16" viewBox="0 0 16 16"><defs><radialGradient id="inf" cx=".4" cy=".3" r=".8"><stop offset="0" stop-color="#8fb6ff"/><stop offset=".5" stop-color="#2b62e0"/><stop offset="1" stop-color="#0a2fa0"/></radialGradient></defs><circle cx="8" cy="8" r="7" fill="url(#inf)"/><circle cx="8" cy="4.300" r="1.300" fill="#fff"/><path d="M6.300 6.800 H9.200 V11.500 H10.200 V12.500 H6 V11.500 H7 V7.800 H6.300Z" fill="#fff"/></svg>
<span class="abs" style="left:32px;top:0;letter-spacing:.14px">Z=1/1 T=1/1</span><span class="abs" style="left:561px;top:0;letter-spacing:-.16px">x0.25</span>
<div class="grip" style="left:611px;top:13px"><svg width="14" height="14" viewBox="0 0 14 14"><path d="M2 13 L13 2 M6 13 L13 6 M10 13 L13 10" stroke="#8d8d8d" stroke-width="1" fill="none"/></svg></div>
</div>
</div>

</body></html>
